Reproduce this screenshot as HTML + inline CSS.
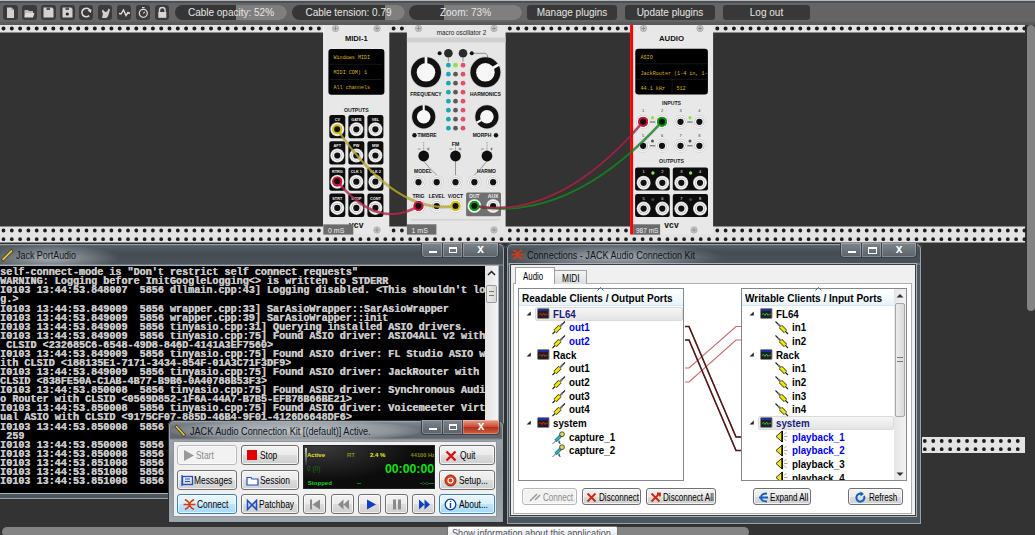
<!DOCTYPE html><html><head><meta charset="utf-8"><style>
*{margin:0;padding:0;box-sizing:border-box}
html,body{width:1035px;height:535px;overflow:hidden;background:#333333;font-family:"Liberation Sans",sans-serif}
.a{position:absolute}
.tb{position:absolute;top:5px;height:14.5px;width:14.5px;background:#3b3b3b;border-radius:3px}
.sl{position:absolute;top:5px;height:15px;border-radius:8px;background:#363636;overflow:hidden;color:#e6e6e6;font-size:10px;text-align:center;line-height:15px}
.sl i{position:absolute;top:0;bottom:0;right:0;background:#7f7f7f}
.sl span{position:relative}
.mb{position:absolute;top:5px;height:15px;border-radius:3px;background:#383838;color:#e6e6e6;font-size:10px;text-align:center;line-height:15px}
</style></head><body>

<svg class="a" style="left:0;top:0" width="1035" height="535" viewBox="0 0 1035 535">
<rect x="0" y="24.5" width="1025" height="8" fill="#e3e3e3"/>
<path d="M1.50 28.50a2 2 0 1 0 4 0a2 2 0 1 0 -4 0M9.80 28.50a2 2 0 1 0 4 0a2 2 0 1 0 -4 0M18.10 28.50a2 2 0 1 0 4 0a2 2 0 1 0 -4 0M26.40 28.50a2 2 0 1 0 4 0a2 2 0 1 0 -4 0M34.70 28.50a2 2 0 1 0 4 0a2 2 0 1 0 -4 0M43.00 28.50a2 2 0 1 0 4 0a2 2 0 1 0 -4 0M51.30 28.50a2 2 0 1 0 4 0a2 2 0 1 0 -4 0M59.60 28.50a2 2 0 1 0 4 0a2 2 0 1 0 -4 0M67.90 28.50a2 2 0 1 0 4 0a2 2 0 1 0 -4 0M76.20 28.50a2 2 0 1 0 4 0a2 2 0 1 0 -4 0M84.50 28.50a2 2 0 1 0 4 0a2 2 0 1 0 -4 0M92.80 28.50a2 2 0 1 0 4 0a2 2 0 1 0 -4 0M101.10 28.50a2 2 0 1 0 4 0a2 2 0 1 0 -4 0M109.40 28.50a2 2 0 1 0 4 0a2 2 0 1 0 -4 0M117.70 28.50a2 2 0 1 0 4 0a2 2 0 1 0 -4 0M126.00 28.50a2 2 0 1 0 4 0a2 2 0 1 0 -4 0M134.30 28.50a2 2 0 1 0 4 0a2 2 0 1 0 -4 0M142.60 28.50a2 2 0 1 0 4 0a2 2 0 1 0 -4 0M150.90 28.50a2 2 0 1 0 4 0a2 2 0 1 0 -4 0M159.20 28.50a2 2 0 1 0 4 0a2 2 0 1 0 -4 0M167.50 28.50a2 2 0 1 0 4 0a2 2 0 1 0 -4 0M175.80 28.50a2 2 0 1 0 4 0a2 2 0 1 0 -4 0M184.10 28.50a2 2 0 1 0 4 0a2 2 0 1 0 -4 0M192.40 28.50a2 2 0 1 0 4 0a2 2 0 1 0 -4 0M200.70 28.50a2 2 0 1 0 4 0a2 2 0 1 0 -4 0M209.00 28.50a2 2 0 1 0 4 0a2 2 0 1 0 -4 0M217.30 28.50a2 2 0 1 0 4 0a2 2 0 1 0 -4 0M225.60 28.50a2 2 0 1 0 4 0a2 2 0 1 0 -4 0M233.90 28.50a2 2 0 1 0 4 0a2 2 0 1 0 -4 0M242.20 28.50a2 2 0 1 0 4 0a2 2 0 1 0 -4 0M250.50 28.50a2 2 0 1 0 4 0a2 2 0 1 0 -4 0M258.80 28.50a2 2 0 1 0 4 0a2 2 0 1 0 -4 0M267.10 28.50a2 2 0 1 0 4 0a2 2 0 1 0 -4 0M275.40 28.50a2 2 0 1 0 4 0a2 2 0 1 0 -4 0M283.70 28.50a2 2 0 1 0 4 0a2 2 0 1 0 -4 0M292.00 28.50a2 2 0 1 0 4 0a2 2 0 1 0 -4 0M300.30 28.50a2 2 0 1 0 4 0a2 2 0 1 0 -4 0M308.60 28.50a2 2 0 1 0 4 0a2 2 0 1 0 -4 0M316.90 28.50a2 2 0 1 0 4 0a2 2 0 1 0 -4 0M325.20 28.50a2 2 0 1 0 4 0a2 2 0 1 0 -4 0M333.50 28.50a2 2 0 1 0 4 0a2 2 0 1 0 -4 0M341.80 28.50a2 2 0 1 0 4 0a2 2 0 1 0 -4 0M350.10 28.50a2 2 0 1 0 4 0a2 2 0 1 0 -4 0M358.40 28.50a2 2 0 1 0 4 0a2 2 0 1 0 -4 0M366.70 28.50a2 2 0 1 0 4 0a2 2 0 1 0 -4 0M375.00 28.50a2 2 0 1 0 4 0a2 2 0 1 0 -4 0M383.30 28.50a2 2 0 1 0 4 0a2 2 0 1 0 -4 0M391.60 28.50a2 2 0 1 0 4 0a2 2 0 1 0 -4 0M399.90 28.50a2 2 0 1 0 4 0a2 2 0 1 0 -4 0M408.20 28.50a2 2 0 1 0 4 0a2 2 0 1 0 -4 0M416.50 28.50a2 2 0 1 0 4 0a2 2 0 1 0 -4 0M424.80 28.50a2 2 0 1 0 4 0a2 2 0 1 0 -4 0M433.10 28.50a2 2 0 1 0 4 0a2 2 0 1 0 -4 0M441.40 28.50a2 2 0 1 0 4 0a2 2 0 1 0 -4 0M449.70 28.50a2 2 0 1 0 4 0a2 2 0 1 0 -4 0M458.00 28.50a2 2 0 1 0 4 0a2 2 0 1 0 -4 0M466.30 28.50a2 2 0 1 0 4 0a2 2 0 1 0 -4 0M474.60 28.50a2 2 0 1 0 4 0a2 2 0 1 0 -4 0M482.90 28.50a2 2 0 1 0 4 0a2 2 0 1 0 -4 0M491.20 28.50a2 2 0 1 0 4 0a2 2 0 1 0 -4 0M499.50 28.50a2 2 0 1 0 4 0a2 2 0 1 0 -4 0M507.80 28.50a2 2 0 1 0 4 0a2 2 0 1 0 -4 0M516.10 28.50a2 2 0 1 0 4 0a2 2 0 1 0 -4 0M524.40 28.50a2 2 0 1 0 4 0a2 2 0 1 0 -4 0M532.70 28.50a2 2 0 1 0 4 0a2 2 0 1 0 -4 0M541.00 28.50a2 2 0 1 0 4 0a2 2 0 1 0 -4 0M549.30 28.50a2 2 0 1 0 4 0a2 2 0 1 0 -4 0M557.60 28.50a2 2 0 1 0 4 0a2 2 0 1 0 -4 0M565.90 28.50a2 2 0 1 0 4 0a2 2 0 1 0 -4 0M574.20 28.50a2 2 0 1 0 4 0a2 2 0 1 0 -4 0M582.50 28.50a2 2 0 1 0 4 0a2 2 0 1 0 -4 0M590.80 28.50a2 2 0 1 0 4 0a2 2 0 1 0 -4 0M599.10 28.50a2 2 0 1 0 4 0a2 2 0 1 0 -4 0M607.40 28.50a2 2 0 1 0 4 0a2 2 0 1 0 -4 0M615.70 28.50a2 2 0 1 0 4 0a2 2 0 1 0 -4 0M624.00 28.50a2 2 0 1 0 4 0a2 2 0 1 0 -4 0M632.30 28.50a2 2 0 1 0 4 0a2 2 0 1 0 -4 0M640.60 28.50a2 2 0 1 0 4 0a2 2 0 1 0 -4 0M648.90 28.50a2 2 0 1 0 4 0a2 2 0 1 0 -4 0M657.20 28.50a2 2 0 1 0 4 0a2 2 0 1 0 -4 0M665.50 28.50a2 2 0 1 0 4 0a2 2 0 1 0 -4 0M673.80 28.50a2 2 0 1 0 4 0a2 2 0 1 0 -4 0M682.10 28.50a2 2 0 1 0 4 0a2 2 0 1 0 -4 0M690.40 28.50a2 2 0 1 0 4 0a2 2 0 1 0 -4 0M698.70 28.50a2 2 0 1 0 4 0a2 2 0 1 0 -4 0M707.00 28.50a2 2 0 1 0 4 0a2 2 0 1 0 -4 0M715.30 28.50a2 2 0 1 0 4 0a2 2 0 1 0 -4 0M723.60 28.50a2 2 0 1 0 4 0a2 2 0 1 0 -4 0M731.90 28.50a2 2 0 1 0 4 0a2 2 0 1 0 -4 0M740.20 28.50a2 2 0 1 0 4 0a2 2 0 1 0 -4 0M748.50 28.50a2 2 0 1 0 4 0a2 2 0 1 0 -4 0M756.80 28.50a2 2 0 1 0 4 0a2 2 0 1 0 -4 0M765.10 28.50a2 2 0 1 0 4 0a2 2 0 1 0 -4 0M773.40 28.50a2 2 0 1 0 4 0a2 2 0 1 0 -4 0M781.70 28.50a2 2 0 1 0 4 0a2 2 0 1 0 -4 0M790.00 28.50a2 2 0 1 0 4 0a2 2 0 1 0 -4 0M798.30 28.50a2 2 0 1 0 4 0a2 2 0 1 0 -4 0M806.60 28.50a2 2 0 1 0 4 0a2 2 0 1 0 -4 0M814.90 28.50a2 2 0 1 0 4 0a2 2 0 1 0 -4 0M823.20 28.50a2 2 0 1 0 4 0a2 2 0 1 0 -4 0M831.50 28.50a2 2 0 1 0 4 0a2 2 0 1 0 -4 0M839.80 28.50a2 2 0 1 0 4 0a2 2 0 1 0 -4 0M848.10 28.50a2 2 0 1 0 4 0a2 2 0 1 0 -4 0M856.40 28.50a2 2 0 1 0 4 0a2 2 0 1 0 -4 0M864.70 28.50a2 2 0 1 0 4 0a2 2 0 1 0 -4 0M873.00 28.50a2 2 0 1 0 4 0a2 2 0 1 0 -4 0M881.30 28.50a2 2 0 1 0 4 0a2 2 0 1 0 -4 0M889.60 28.50a2 2 0 1 0 4 0a2 2 0 1 0 -4 0M897.90 28.50a2 2 0 1 0 4 0a2 2 0 1 0 -4 0M906.20 28.50a2 2 0 1 0 4 0a2 2 0 1 0 -4 0M914.50 28.50a2 2 0 1 0 4 0a2 2 0 1 0 -4 0M922.80 28.50a2 2 0 1 0 4 0a2 2 0 1 0 -4 0M931.10 28.50a2 2 0 1 0 4 0a2 2 0 1 0 -4 0M939.40 28.50a2 2 0 1 0 4 0a2 2 0 1 0 -4 0M947.70 28.50a2 2 0 1 0 4 0a2 2 0 1 0 -4 0M956.00 28.50a2 2 0 1 0 4 0a2 2 0 1 0 -4 0M964.30 28.50a2 2 0 1 0 4 0a2 2 0 1 0 -4 0M972.60 28.50a2 2 0 1 0 4 0a2 2 0 1 0 -4 0M980.90 28.50a2 2 0 1 0 4 0a2 2 0 1 0 -4 0M989.20 28.50a2 2 0 1 0 4 0a2 2 0 1 0 -4 0M997.50 28.50a2 2 0 1 0 4 0a2 2 0 1 0 -4 0M1005.80 28.50a2 2 0 1 0 4 0a2 2 0 1 0 -4 0M1014.10 28.50a2 2 0 1 0 4 0a2 2 0 1 0 -4 0M1022.40 28.50a2 2 0 1 0 4 0a2 2 0 1 0 -4 0" fill="#1c1c1c"/>
<rect x="0" y="226.5" width="1025" height="16" fill="#e3e3e3"/>
<path d="M1.60 230.50a1.9 1.9 0 1 0 3.8 0a1.9 1.9 0 1 0 -3.8 0M9.90 230.50a1.9 1.9 0 1 0 3.8 0a1.9 1.9 0 1 0 -3.8 0M18.20 230.50a1.9 1.9 0 1 0 3.8 0a1.9 1.9 0 1 0 -3.8 0M26.50 230.50a1.9 1.9 0 1 0 3.8 0a1.9 1.9 0 1 0 -3.8 0M34.80 230.50a1.9 1.9 0 1 0 3.8 0a1.9 1.9 0 1 0 -3.8 0M43.10 230.50a1.9 1.9 0 1 0 3.8 0a1.9 1.9 0 1 0 -3.8 0M51.40 230.50a1.9 1.9 0 1 0 3.8 0a1.9 1.9 0 1 0 -3.8 0M59.70 230.50a1.9 1.9 0 1 0 3.8 0a1.9 1.9 0 1 0 -3.8 0M68.00 230.50a1.9 1.9 0 1 0 3.8 0a1.9 1.9 0 1 0 -3.8 0M76.30 230.50a1.9 1.9 0 1 0 3.8 0a1.9 1.9 0 1 0 -3.8 0M84.60 230.50a1.9 1.9 0 1 0 3.8 0a1.9 1.9 0 1 0 -3.8 0M92.90 230.50a1.9 1.9 0 1 0 3.8 0a1.9 1.9 0 1 0 -3.8 0M101.20 230.50a1.9 1.9 0 1 0 3.8 0a1.9 1.9 0 1 0 -3.8 0M109.50 230.50a1.9 1.9 0 1 0 3.8 0a1.9 1.9 0 1 0 -3.8 0M117.80 230.50a1.9 1.9 0 1 0 3.8 0a1.9 1.9 0 1 0 -3.8 0M126.10 230.50a1.9 1.9 0 1 0 3.8 0a1.9 1.9 0 1 0 -3.8 0M134.40 230.50a1.9 1.9 0 1 0 3.8 0a1.9 1.9 0 1 0 -3.8 0M142.70 230.50a1.9 1.9 0 1 0 3.8 0a1.9 1.9 0 1 0 -3.8 0M151.00 230.50a1.9 1.9 0 1 0 3.8 0a1.9 1.9 0 1 0 -3.8 0M159.30 230.50a1.9 1.9 0 1 0 3.8 0a1.9 1.9 0 1 0 -3.8 0M167.60 230.50a1.9 1.9 0 1 0 3.8 0a1.9 1.9 0 1 0 -3.8 0M175.90 230.50a1.9 1.9 0 1 0 3.8 0a1.9 1.9 0 1 0 -3.8 0M184.20 230.50a1.9 1.9 0 1 0 3.8 0a1.9 1.9 0 1 0 -3.8 0M192.50 230.50a1.9 1.9 0 1 0 3.8 0a1.9 1.9 0 1 0 -3.8 0M200.80 230.50a1.9 1.9 0 1 0 3.8 0a1.9 1.9 0 1 0 -3.8 0M209.10 230.50a1.9 1.9 0 1 0 3.8 0a1.9 1.9 0 1 0 -3.8 0M217.40 230.50a1.9 1.9 0 1 0 3.8 0a1.9 1.9 0 1 0 -3.8 0M225.70 230.50a1.9 1.9 0 1 0 3.8 0a1.9 1.9 0 1 0 -3.8 0M234.00 230.50a1.9 1.9 0 1 0 3.8 0a1.9 1.9 0 1 0 -3.8 0M242.30 230.50a1.9 1.9 0 1 0 3.8 0a1.9 1.9 0 1 0 -3.8 0M250.60 230.50a1.9 1.9 0 1 0 3.8 0a1.9 1.9 0 1 0 -3.8 0M258.90 230.50a1.9 1.9 0 1 0 3.8 0a1.9 1.9 0 1 0 -3.8 0M267.20 230.50a1.9 1.9 0 1 0 3.8 0a1.9 1.9 0 1 0 -3.8 0M275.50 230.50a1.9 1.9 0 1 0 3.8 0a1.9 1.9 0 1 0 -3.8 0M283.80 230.50a1.9 1.9 0 1 0 3.8 0a1.9 1.9 0 1 0 -3.8 0M292.10 230.50a1.9 1.9 0 1 0 3.8 0a1.9 1.9 0 1 0 -3.8 0M300.40 230.50a1.9 1.9 0 1 0 3.8 0a1.9 1.9 0 1 0 -3.8 0M308.70 230.50a1.9 1.9 0 1 0 3.8 0a1.9 1.9 0 1 0 -3.8 0M317.00 230.50a1.9 1.9 0 1 0 3.8 0a1.9 1.9 0 1 0 -3.8 0M325.30 230.50a1.9 1.9 0 1 0 3.8 0a1.9 1.9 0 1 0 -3.8 0M333.60 230.50a1.9 1.9 0 1 0 3.8 0a1.9 1.9 0 1 0 -3.8 0M341.90 230.50a1.9 1.9 0 1 0 3.8 0a1.9 1.9 0 1 0 -3.8 0M350.20 230.50a1.9 1.9 0 1 0 3.8 0a1.9 1.9 0 1 0 -3.8 0M358.50 230.50a1.9 1.9 0 1 0 3.8 0a1.9 1.9 0 1 0 -3.8 0M366.80 230.50a1.9 1.9 0 1 0 3.8 0a1.9 1.9 0 1 0 -3.8 0M375.10 230.50a1.9 1.9 0 1 0 3.8 0a1.9 1.9 0 1 0 -3.8 0M383.40 230.50a1.9 1.9 0 1 0 3.8 0a1.9 1.9 0 1 0 -3.8 0M391.70 230.50a1.9 1.9 0 1 0 3.8 0a1.9 1.9 0 1 0 -3.8 0M400.00 230.50a1.9 1.9 0 1 0 3.8 0a1.9 1.9 0 1 0 -3.8 0M408.30 230.50a1.9 1.9 0 1 0 3.8 0a1.9 1.9 0 1 0 -3.8 0M416.60 230.50a1.9 1.9 0 1 0 3.8 0a1.9 1.9 0 1 0 -3.8 0M424.90 230.50a1.9 1.9 0 1 0 3.8 0a1.9 1.9 0 1 0 -3.8 0M433.20 230.50a1.9 1.9 0 1 0 3.8 0a1.9 1.9 0 1 0 -3.8 0M441.50 230.50a1.9 1.9 0 1 0 3.8 0a1.9 1.9 0 1 0 -3.8 0M449.80 230.50a1.9 1.9 0 1 0 3.8 0a1.9 1.9 0 1 0 -3.8 0M458.10 230.50a1.9 1.9 0 1 0 3.8 0a1.9 1.9 0 1 0 -3.8 0M466.40 230.50a1.9 1.9 0 1 0 3.8 0a1.9 1.9 0 1 0 -3.8 0M474.70 230.50a1.9 1.9 0 1 0 3.8 0a1.9 1.9 0 1 0 -3.8 0M483.00 230.50a1.9 1.9 0 1 0 3.8 0a1.9 1.9 0 1 0 -3.8 0M491.30 230.50a1.9 1.9 0 1 0 3.8 0a1.9 1.9 0 1 0 -3.8 0M499.60 230.50a1.9 1.9 0 1 0 3.8 0a1.9 1.9 0 1 0 -3.8 0M507.90 230.50a1.9 1.9 0 1 0 3.8 0a1.9 1.9 0 1 0 -3.8 0M516.20 230.50a1.9 1.9 0 1 0 3.8 0a1.9 1.9 0 1 0 -3.8 0M524.50 230.50a1.9 1.9 0 1 0 3.8 0a1.9 1.9 0 1 0 -3.8 0M532.80 230.50a1.9 1.9 0 1 0 3.8 0a1.9 1.9 0 1 0 -3.8 0M541.10 230.50a1.9 1.9 0 1 0 3.8 0a1.9 1.9 0 1 0 -3.8 0M549.40 230.50a1.9 1.9 0 1 0 3.8 0a1.9 1.9 0 1 0 -3.8 0M557.70 230.50a1.9 1.9 0 1 0 3.8 0a1.9 1.9 0 1 0 -3.8 0M566.00 230.50a1.9 1.9 0 1 0 3.8 0a1.9 1.9 0 1 0 -3.8 0M574.30 230.50a1.9 1.9 0 1 0 3.8 0a1.9 1.9 0 1 0 -3.8 0M582.60 230.50a1.9 1.9 0 1 0 3.8 0a1.9 1.9 0 1 0 -3.8 0M590.90 230.50a1.9 1.9 0 1 0 3.8 0a1.9 1.9 0 1 0 -3.8 0M599.20 230.50a1.9 1.9 0 1 0 3.8 0a1.9 1.9 0 1 0 -3.8 0M607.50 230.50a1.9 1.9 0 1 0 3.8 0a1.9 1.9 0 1 0 -3.8 0M615.80 230.50a1.9 1.9 0 1 0 3.8 0a1.9 1.9 0 1 0 -3.8 0M624.10 230.50a1.9 1.9 0 1 0 3.8 0a1.9 1.9 0 1 0 -3.8 0M632.40 230.50a1.9 1.9 0 1 0 3.8 0a1.9 1.9 0 1 0 -3.8 0M640.70 230.50a1.9 1.9 0 1 0 3.8 0a1.9 1.9 0 1 0 -3.8 0M649.00 230.50a1.9 1.9 0 1 0 3.8 0a1.9 1.9 0 1 0 -3.8 0M657.30 230.50a1.9 1.9 0 1 0 3.8 0a1.9 1.9 0 1 0 -3.8 0M665.60 230.50a1.9 1.9 0 1 0 3.8 0a1.9 1.9 0 1 0 -3.8 0M673.90 230.50a1.9 1.9 0 1 0 3.8 0a1.9 1.9 0 1 0 -3.8 0M682.20 230.50a1.9 1.9 0 1 0 3.8 0a1.9 1.9 0 1 0 -3.8 0M690.50 230.50a1.9 1.9 0 1 0 3.8 0a1.9 1.9 0 1 0 -3.8 0M698.80 230.50a1.9 1.9 0 1 0 3.8 0a1.9 1.9 0 1 0 -3.8 0M707.10 230.50a1.9 1.9 0 1 0 3.8 0a1.9 1.9 0 1 0 -3.8 0M715.40 230.50a1.9 1.9 0 1 0 3.8 0a1.9 1.9 0 1 0 -3.8 0M723.70 230.50a1.9 1.9 0 1 0 3.8 0a1.9 1.9 0 1 0 -3.8 0M732.00 230.50a1.9 1.9 0 1 0 3.8 0a1.9 1.9 0 1 0 -3.8 0M740.30 230.50a1.9 1.9 0 1 0 3.8 0a1.9 1.9 0 1 0 -3.8 0M748.60 230.50a1.9 1.9 0 1 0 3.8 0a1.9 1.9 0 1 0 -3.8 0M756.90 230.50a1.9 1.9 0 1 0 3.8 0a1.9 1.9 0 1 0 -3.8 0M765.20 230.50a1.9 1.9 0 1 0 3.8 0a1.9 1.9 0 1 0 -3.8 0M773.50 230.50a1.9 1.9 0 1 0 3.8 0a1.9 1.9 0 1 0 -3.8 0M781.80 230.50a1.9 1.9 0 1 0 3.8 0a1.9 1.9 0 1 0 -3.8 0M790.10 230.50a1.9 1.9 0 1 0 3.8 0a1.9 1.9 0 1 0 -3.8 0M798.40 230.50a1.9 1.9 0 1 0 3.8 0a1.9 1.9 0 1 0 -3.8 0M806.70 230.50a1.9 1.9 0 1 0 3.8 0a1.9 1.9 0 1 0 -3.8 0M815.00 230.50a1.9 1.9 0 1 0 3.8 0a1.9 1.9 0 1 0 -3.8 0M823.30 230.50a1.9 1.9 0 1 0 3.8 0a1.9 1.9 0 1 0 -3.8 0M831.60 230.50a1.9 1.9 0 1 0 3.8 0a1.9 1.9 0 1 0 -3.8 0M839.90 230.50a1.9 1.9 0 1 0 3.8 0a1.9 1.9 0 1 0 -3.8 0M848.20 230.50a1.9 1.9 0 1 0 3.8 0a1.9 1.9 0 1 0 -3.8 0M856.50 230.50a1.9 1.9 0 1 0 3.8 0a1.9 1.9 0 1 0 -3.8 0M864.80 230.50a1.9 1.9 0 1 0 3.8 0a1.9 1.9 0 1 0 -3.8 0M873.10 230.50a1.9 1.9 0 1 0 3.8 0a1.9 1.9 0 1 0 -3.8 0M881.40 230.50a1.9 1.9 0 1 0 3.8 0a1.9 1.9 0 1 0 -3.8 0M889.70 230.50a1.9 1.9 0 1 0 3.8 0a1.9 1.9 0 1 0 -3.8 0M898.00 230.50a1.9 1.9 0 1 0 3.8 0a1.9 1.9 0 1 0 -3.8 0M906.30 230.50a1.9 1.9 0 1 0 3.8 0a1.9 1.9 0 1 0 -3.8 0M914.60 230.50a1.9 1.9 0 1 0 3.8 0a1.9 1.9 0 1 0 -3.8 0M922.90 230.50a1.9 1.9 0 1 0 3.8 0a1.9 1.9 0 1 0 -3.8 0M931.20 230.50a1.9 1.9 0 1 0 3.8 0a1.9 1.9 0 1 0 -3.8 0M939.50 230.50a1.9 1.9 0 1 0 3.8 0a1.9 1.9 0 1 0 -3.8 0M947.80 230.50a1.9 1.9 0 1 0 3.8 0a1.9 1.9 0 1 0 -3.8 0M956.10 230.50a1.9 1.9 0 1 0 3.8 0a1.9 1.9 0 1 0 -3.8 0M964.40 230.50a1.9 1.9 0 1 0 3.8 0a1.9 1.9 0 1 0 -3.8 0M972.70 230.50a1.9 1.9 0 1 0 3.8 0a1.9 1.9 0 1 0 -3.8 0M981.00 230.50a1.9 1.9 0 1 0 3.8 0a1.9 1.9 0 1 0 -3.8 0M989.30 230.50a1.9 1.9 0 1 0 3.8 0a1.9 1.9 0 1 0 -3.8 0M997.60 230.50a1.9 1.9 0 1 0 3.8 0a1.9 1.9 0 1 0 -3.8 0M1005.90 230.50a1.9 1.9 0 1 0 3.8 0a1.9 1.9 0 1 0 -3.8 0M1014.20 230.50a1.9 1.9 0 1 0 3.8 0a1.9 1.9 0 1 0 -3.8 0M1022.50 230.50a1.9 1.9 0 1 0 3.8 0a1.9 1.9 0 1 0 -3.8 0" fill="#1c1c1c"/>
<path d="M1.60 239.20a1.9 1.9 0 1 0 3.8 0a1.9 1.9 0 1 0 -3.8 0M9.90 239.20a1.9 1.9 0 1 0 3.8 0a1.9 1.9 0 1 0 -3.8 0M18.20 239.20a1.9 1.9 0 1 0 3.8 0a1.9 1.9 0 1 0 -3.8 0M26.50 239.20a1.9 1.9 0 1 0 3.8 0a1.9 1.9 0 1 0 -3.8 0M34.80 239.20a1.9 1.9 0 1 0 3.8 0a1.9 1.9 0 1 0 -3.8 0M43.10 239.20a1.9 1.9 0 1 0 3.8 0a1.9 1.9 0 1 0 -3.8 0M51.40 239.20a1.9 1.9 0 1 0 3.8 0a1.9 1.9 0 1 0 -3.8 0M59.70 239.20a1.9 1.9 0 1 0 3.8 0a1.9 1.9 0 1 0 -3.8 0M68.00 239.20a1.9 1.9 0 1 0 3.8 0a1.9 1.9 0 1 0 -3.8 0M76.30 239.20a1.9 1.9 0 1 0 3.8 0a1.9 1.9 0 1 0 -3.8 0M84.60 239.20a1.9 1.9 0 1 0 3.8 0a1.9 1.9 0 1 0 -3.8 0M92.90 239.20a1.9 1.9 0 1 0 3.8 0a1.9 1.9 0 1 0 -3.8 0M101.20 239.20a1.9 1.9 0 1 0 3.8 0a1.9 1.9 0 1 0 -3.8 0M109.50 239.20a1.9 1.9 0 1 0 3.8 0a1.9 1.9 0 1 0 -3.8 0M117.80 239.20a1.9 1.9 0 1 0 3.8 0a1.9 1.9 0 1 0 -3.8 0M126.10 239.20a1.9 1.9 0 1 0 3.8 0a1.9 1.9 0 1 0 -3.8 0M134.40 239.20a1.9 1.9 0 1 0 3.8 0a1.9 1.9 0 1 0 -3.8 0M142.70 239.20a1.9 1.9 0 1 0 3.8 0a1.9 1.9 0 1 0 -3.8 0M151.00 239.20a1.9 1.9 0 1 0 3.8 0a1.9 1.9 0 1 0 -3.8 0M159.30 239.20a1.9 1.9 0 1 0 3.8 0a1.9 1.9 0 1 0 -3.8 0M167.60 239.20a1.9 1.9 0 1 0 3.8 0a1.9 1.9 0 1 0 -3.8 0M175.90 239.20a1.9 1.9 0 1 0 3.8 0a1.9 1.9 0 1 0 -3.8 0M184.20 239.20a1.9 1.9 0 1 0 3.8 0a1.9 1.9 0 1 0 -3.8 0M192.50 239.20a1.9 1.9 0 1 0 3.8 0a1.9 1.9 0 1 0 -3.8 0M200.80 239.20a1.9 1.9 0 1 0 3.8 0a1.9 1.9 0 1 0 -3.8 0M209.10 239.20a1.9 1.9 0 1 0 3.8 0a1.9 1.9 0 1 0 -3.8 0M217.40 239.20a1.9 1.9 0 1 0 3.8 0a1.9 1.9 0 1 0 -3.8 0M225.70 239.20a1.9 1.9 0 1 0 3.8 0a1.9 1.9 0 1 0 -3.8 0M234.00 239.20a1.9 1.9 0 1 0 3.8 0a1.9 1.9 0 1 0 -3.8 0M242.30 239.20a1.9 1.9 0 1 0 3.8 0a1.9 1.9 0 1 0 -3.8 0M250.60 239.20a1.9 1.9 0 1 0 3.8 0a1.9 1.9 0 1 0 -3.8 0M258.90 239.20a1.9 1.9 0 1 0 3.8 0a1.9 1.9 0 1 0 -3.8 0M267.20 239.20a1.9 1.9 0 1 0 3.8 0a1.9 1.9 0 1 0 -3.8 0M275.50 239.20a1.9 1.9 0 1 0 3.8 0a1.9 1.9 0 1 0 -3.8 0M283.80 239.20a1.9 1.9 0 1 0 3.8 0a1.9 1.9 0 1 0 -3.8 0M292.10 239.20a1.9 1.9 0 1 0 3.8 0a1.9 1.9 0 1 0 -3.8 0M300.40 239.20a1.9 1.9 0 1 0 3.8 0a1.9 1.9 0 1 0 -3.8 0M308.70 239.20a1.9 1.9 0 1 0 3.8 0a1.9 1.9 0 1 0 -3.8 0M317.00 239.20a1.9 1.9 0 1 0 3.8 0a1.9 1.9 0 1 0 -3.8 0M325.30 239.20a1.9 1.9 0 1 0 3.8 0a1.9 1.9 0 1 0 -3.8 0M333.60 239.20a1.9 1.9 0 1 0 3.8 0a1.9 1.9 0 1 0 -3.8 0M341.90 239.20a1.9 1.9 0 1 0 3.8 0a1.9 1.9 0 1 0 -3.8 0M350.20 239.20a1.9 1.9 0 1 0 3.8 0a1.9 1.9 0 1 0 -3.8 0M358.50 239.20a1.9 1.9 0 1 0 3.8 0a1.9 1.9 0 1 0 -3.8 0M366.80 239.20a1.9 1.9 0 1 0 3.8 0a1.9 1.9 0 1 0 -3.8 0M375.10 239.20a1.9 1.9 0 1 0 3.8 0a1.9 1.9 0 1 0 -3.8 0M383.40 239.20a1.9 1.9 0 1 0 3.8 0a1.9 1.9 0 1 0 -3.8 0M391.70 239.20a1.9 1.9 0 1 0 3.8 0a1.9 1.9 0 1 0 -3.8 0M400.00 239.20a1.9 1.9 0 1 0 3.8 0a1.9 1.9 0 1 0 -3.8 0M408.30 239.20a1.9 1.9 0 1 0 3.8 0a1.9 1.9 0 1 0 -3.8 0M416.60 239.20a1.9 1.9 0 1 0 3.8 0a1.9 1.9 0 1 0 -3.8 0M424.90 239.20a1.9 1.9 0 1 0 3.8 0a1.9 1.9 0 1 0 -3.8 0M433.20 239.20a1.9 1.9 0 1 0 3.8 0a1.9 1.9 0 1 0 -3.8 0M441.50 239.20a1.9 1.9 0 1 0 3.8 0a1.9 1.9 0 1 0 -3.8 0M449.80 239.20a1.9 1.9 0 1 0 3.8 0a1.9 1.9 0 1 0 -3.8 0M458.10 239.20a1.9 1.9 0 1 0 3.8 0a1.9 1.9 0 1 0 -3.8 0M466.40 239.20a1.9 1.9 0 1 0 3.8 0a1.9 1.9 0 1 0 -3.8 0M474.70 239.20a1.9 1.9 0 1 0 3.8 0a1.9 1.9 0 1 0 -3.8 0M483.00 239.20a1.9 1.9 0 1 0 3.8 0a1.9 1.9 0 1 0 -3.8 0M491.30 239.20a1.9 1.9 0 1 0 3.8 0a1.9 1.9 0 1 0 -3.8 0M499.60 239.20a1.9 1.9 0 1 0 3.8 0a1.9 1.9 0 1 0 -3.8 0M507.90 239.20a1.9 1.9 0 1 0 3.8 0a1.9 1.9 0 1 0 -3.8 0M516.20 239.20a1.9 1.9 0 1 0 3.8 0a1.9 1.9 0 1 0 -3.8 0M524.50 239.20a1.9 1.9 0 1 0 3.8 0a1.9 1.9 0 1 0 -3.8 0M532.80 239.20a1.9 1.9 0 1 0 3.8 0a1.9 1.9 0 1 0 -3.8 0M541.10 239.20a1.9 1.9 0 1 0 3.8 0a1.9 1.9 0 1 0 -3.8 0M549.40 239.20a1.9 1.9 0 1 0 3.8 0a1.9 1.9 0 1 0 -3.8 0M557.70 239.20a1.9 1.9 0 1 0 3.8 0a1.9 1.9 0 1 0 -3.8 0M566.00 239.20a1.9 1.9 0 1 0 3.8 0a1.9 1.9 0 1 0 -3.8 0M574.30 239.20a1.9 1.9 0 1 0 3.8 0a1.9 1.9 0 1 0 -3.8 0M582.60 239.20a1.9 1.9 0 1 0 3.8 0a1.9 1.9 0 1 0 -3.8 0M590.90 239.20a1.9 1.9 0 1 0 3.8 0a1.9 1.9 0 1 0 -3.8 0M599.20 239.20a1.9 1.9 0 1 0 3.8 0a1.9 1.9 0 1 0 -3.8 0M607.50 239.20a1.9 1.9 0 1 0 3.8 0a1.9 1.9 0 1 0 -3.8 0M615.80 239.20a1.9 1.9 0 1 0 3.8 0a1.9 1.9 0 1 0 -3.8 0M624.10 239.20a1.9 1.9 0 1 0 3.8 0a1.9 1.9 0 1 0 -3.8 0M632.40 239.20a1.9 1.9 0 1 0 3.8 0a1.9 1.9 0 1 0 -3.8 0M640.70 239.20a1.9 1.9 0 1 0 3.8 0a1.9 1.9 0 1 0 -3.8 0M649.00 239.20a1.9 1.9 0 1 0 3.8 0a1.9 1.9 0 1 0 -3.8 0M657.30 239.20a1.9 1.9 0 1 0 3.8 0a1.9 1.9 0 1 0 -3.8 0M665.60 239.20a1.9 1.9 0 1 0 3.8 0a1.9 1.9 0 1 0 -3.8 0M673.90 239.20a1.9 1.9 0 1 0 3.8 0a1.9 1.9 0 1 0 -3.8 0M682.20 239.20a1.9 1.9 0 1 0 3.8 0a1.9 1.9 0 1 0 -3.8 0M690.50 239.20a1.9 1.9 0 1 0 3.8 0a1.9 1.9 0 1 0 -3.8 0M698.80 239.20a1.9 1.9 0 1 0 3.8 0a1.9 1.9 0 1 0 -3.8 0M707.10 239.20a1.9 1.9 0 1 0 3.8 0a1.9 1.9 0 1 0 -3.8 0M715.40 239.20a1.9 1.9 0 1 0 3.8 0a1.9 1.9 0 1 0 -3.8 0M723.70 239.20a1.9 1.9 0 1 0 3.8 0a1.9 1.9 0 1 0 -3.8 0M732.00 239.20a1.9 1.9 0 1 0 3.8 0a1.9 1.9 0 1 0 -3.8 0M740.30 239.20a1.9 1.9 0 1 0 3.8 0a1.9 1.9 0 1 0 -3.8 0M748.60 239.20a1.9 1.9 0 1 0 3.8 0a1.9 1.9 0 1 0 -3.8 0M756.90 239.20a1.9 1.9 0 1 0 3.8 0a1.9 1.9 0 1 0 -3.8 0M765.20 239.20a1.9 1.9 0 1 0 3.8 0a1.9 1.9 0 1 0 -3.8 0M773.50 239.20a1.9 1.9 0 1 0 3.8 0a1.9 1.9 0 1 0 -3.8 0M781.80 239.20a1.9 1.9 0 1 0 3.8 0a1.9 1.9 0 1 0 -3.8 0M790.10 239.20a1.9 1.9 0 1 0 3.8 0a1.9 1.9 0 1 0 -3.8 0M798.40 239.20a1.9 1.9 0 1 0 3.8 0a1.9 1.9 0 1 0 -3.8 0M806.70 239.20a1.9 1.9 0 1 0 3.8 0a1.9 1.9 0 1 0 -3.8 0M815.00 239.20a1.9 1.9 0 1 0 3.8 0a1.9 1.9 0 1 0 -3.8 0M823.30 239.20a1.9 1.9 0 1 0 3.8 0a1.9 1.9 0 1 0 -3.8 0M831.60 239.20a1.9 1.9 0 1 0 3.8 0a1.9 1.9 0 1 0 -3.8 0M839.90 239.20a1.9 1.9 0 1 0 3.8 0a1.9 1.9 0 1 0 -3.8 0M848.20 239.20a1.9 1.9 0 1 0 3.8 0a1.9 1.9 0 1 0 -3.8 0M856.50 239.20a1.9 1.9 0 1 0 3.8 0a1.9 1.9 0 1 0 -3.8 0M864.80 239.20a1.9 1.9 0 1 0 3.8 0a1.9 1.9 0 1 0 -3.8 0M873.10 239.20a1.9 1.9 0 1 0 3.8 0a1.9 1.9 0 1 0 -3.8 0M881.40 239.20a1.9 1.9 0 1 0 3.8 0a1.9 1.9 0 1 0 -3.8 0M889.70 239.20a1.9 1.9 0 1 0 3.8 0a1.9 1.9 0 1 0 -3.8 0M898.00 239.20a1.9 1.9 0 1 0 3.8 0a1.9 1.9 0 1 0 -3.8 0M906.30 239.20a1.9 1.9 0 1 0 3.8 0a1.9 1.9 0 1 0 -3.8 0M914.60 239.20a1.9 1.9 0 1 0 3.8 0a1.9 1.9 0 1 0 -3.8 0M922.90 239.20a1.9 1.9 0 1 0 3.8 0a1.9 1.9 0 1 0 -3.8 0M931.20 239.20a1.9 1.9 0 1 0 3.8 0a1.9 1.9 0 1 0 -3.8 0M939.50 239.20a1.9 1.9 0 1 0 3.8 0a1.9 1.9 0 1 0 -3.8 0M947.80 239.20a1.9 1.9 0 1 0 3.8 0a1.9 1.9 0 1 0 -3.8 0M956.10 239.20a1.9 1.9 0 1 0 3.8 0a1.9 1.9 0 1 0 -3.8 0M964.40 239.20a1.9 1.9 0 1 0 3.8 0a1.9 1.9 0 1 0 -3.8 0M972.70 239.20a1.9 1.9 0 1 0 3.8 0a1.9 1.9 0 1 0 -3.8 0M981.00 239.20a1.9 1.9 0 1 0 3.8 0a1.9 1.9 0 1 0 -3.8 0M989.30 239.20a1.9 1.9 0 1 0 3.8 0a1.9 1.9 0 1 0 -3.8 0M997.60 239.20a1.9 1.9 0 1 0 3.8 0a1.9 1.9 0 1 0 -3.8 0M1005.90 239.20a1.9 1.9 0 1 0 3.8 0a1.9 1.9 0 1 0 -3.8 0M1014.20 239.20a1.9 1.9 0 1 0 3.8 0a1.9 1.9 0 1 0 -3.8 0M1022.50 239.20a1.9 1.9 0 1 0 3.8 0a1.9 1.9 0 1 0 -3.8 0" fill="#1c1c1c"/>
<rect x="921" y="437" width="104" height="16" fill="#e3e3e3"/>
<path d="M922.90 441.00a1.9 1.9 0 1 0 3.8 0a1.9 1.9 0 1 0 -3.8 0M931.35 441.00a1.9 1.9 0 1 0 3.8 0a1.9 1.9 0 1 0 -3.8 0M939.80 441.00a1.9 1.9 0 1 0 3.8 0a1.9 1.9 0 1 0 -3.8 0M948.25 441.00a1.9 1.9 0 1 0 3.8 0a1.9 1.9 0 1 0 -3.8 0M956.70 441.00a1.9 1.9 0 1 0 3.8 0a1.9 1.9 0 1 0 -3.8 0M965.15 441.00a1.9 1.9 0 1 0 3.8 0a1.9 1.9 0 1 0 -3.8 0M973.60 441.00a1.9 1.9 0 1 0 3.8 0a1.9 1.9 0 1 0 -3.8 0M982.05 441.00a1.9 1.9 0 1 0 3.8 0a1.9 1.9 0 1 0 -3.8 0M990.50 441.00a1.9 1.9 0 1 0 3.8 0a1.9 1.9 0 1 0 -3.8 0M998.95 441.00a1.9 1.9 0 1 0 3.8 0a1.9 1.9 0 1 0 -3.8 0M1007.40 441.00a1.9 1.9 0 1 0 3.8 0a1.9 1.9 0 1 0 -3.8 0M1015.85 441.00a1.9 1.9 0 1 0 3.8 0a1.9 1.9 0 1 0 -3.8 0" fill="#1c1c1c"/>
<path d="M922.90 449.20a1.9 1.9 0 1 0 3.8 0a1.9 1.9 0 1 0 -3.8 0M931.35 449.20a1.9 1.9 0 1 0 3.8 0a1.9 1.9 0 1 0 -3.8 0M939.80 449.20a1.9 1.9 0 1 0 3.8 0a1.9 1.9 0 1 0 -3.8 0M948.25 449.20a1.9 1.9 0 1 0 3.8 0a1.9 1.9 0 1 0 -3.8 0M956.70 449.20a1.9 1.9 0 1 0 3.8 0a1.9 1.9 0 1 0 -3.8 0M965.15 449.20a1.9 1.9 0 1 0 3.8 0a1.9 1.9 0 1 0 -3.8 0M973.60 449.20a1.9 1.9 0 1 0 3.8 0a1.9 1.9 0 1 0 -3.8 0M982.05 449.20a1.9 1.9 0 1 0 3.8 0a1.9 1.9 0 1 0 -3.8 0M990.50 449.20a1.9 1.9 0 1 0 3.8 0a1.9 1.9 0 1 0 -3.8 0M998.95 449.20a1.9 1.9 0 1 0 3.8 0a1.9 1.9 0 1 0 -3.8 0M1007.40 449.20a1.9 1.9 0 1 0 3.8 0a1.9 1.9 0 1 0 -3.8 0M1015.85 449.20a1.9 1.9 0 1 0 3.8 0a1.9 1.9 0 1 0 -3.8 0" fill="#1c1c1c"/>
<rect x="323.3" y="24" width="66" height="210.5" fill="#e8e8e8"/>
<rect x="323.3" y="24" width="0.8" height="210.5" fill="#f8f8f8"/>
<circle cx="335.50" cy="28.50" r="3.2" fill="#c8c8c8" stroke="#9a9a9a" stroke-width="0.6"/>
<path d="M333.5 28.5h4M335.5 26.5v4" stroke="#8a8a8a" stroke-width="0.9"/>
<circle cx="377.00" cy="28.50" r="3.2" fill="#c8c8c8" stroke="#9a9a9a" stroke-width="0.6"/>
<path d="M375.0 28.5h4M377 26.5v4" stroke="#8a8a8a" stroke-width="0.9"/>
<circle cx="377.00" cy="230.00" r="3.2" fill="#c8c8c8" stroke="#9a9a9a" stroke-width="0.6"/>
<path d="M375.0 230h4M377 228.0v4" stroke="#8a8a8a" stroke-width="0.9"/>
<text x="356.3" y="41.2" font-family="Liberation Sans" font-size="7.6" font-weight="bold" fill="#111" text-anchor="middle" >MIDI-1</text>
<rect x="328.4" y="49" width="56" height="45.8" rx="3" fill="#000"/>
<path d="M330 64.3h52M330 79.5h52" stroke="#262626" stroke-width="0.6"/>
<text x="333.5" y="58.8" font-family="Liberation Mono" font-size="5.8" font-weight="normal" fill="#dcb41c" text-anchor="start" textLength="36.6" lengthAdjust="spacingAndGlyphs">Windows MIDI</text>
<text x="333.5" y="73.8" font-family="Liberation Mono" font-size="5.8" font-weight="normal" fill="#dcb41c" text-anchor="start" textLength="33.5" lengthAdjust="spacingAndGlyphs">MIDI COM) 1</text>
<text x="333.5" y="88.8" font-family="Liberation Mono" font-size="5.8" font-weight="normal" fill="#dcb41c" text-anchor="start" textLength="36.6" lengthAdjust="spacingAndGlyphs">All channels</text>
<text x="356.3" y="111.5" font-family="Liberation Sans" font-size="5.2" font-weight="bold" fill="#222" text-anchor="middle" >OUTPUTS</text>
<rect x="329.3" y="115.0" width="16" height="23.3" rx="2.2" fill="#0d0d0d"/>
<text x="337.3" y="121.0" font-family="Liberation Sans" font-size="3.8" font-weight="bold" fill="#f0f0f0" text-anchor="middle" >CV</text>
<circle cx="337.30" cy="129.30" r="7.0" fill="#d0d0d0" />
<circle cx="337.30" cy="129.30" r="6.3" fill="#f6f6f6" />
<circle cx="337.30" cy="129.30" r="5.0" fill="#a8a8a8" />
<circle cx="337.30" cy="129.30" r="4.5" fill="#f2f2f2" />
<circle cx="337.30" cy="129.30" r="4.9" fill="#d8c000" />
<circle cx="337.30" cy="129.30" r="3.0" fill="#111" />
<rect x="348.35" y="115.0" width="16" height="23.3" rx="2.2" fill="#0d0d0d"/>
<text x="356.35" y="121.0" font-family="Liberation Sans" font-size="3.8" font-weight="bold" fill="#f0f0f0" text-anchor="middle" >GATE</text>
<circle cx="356.35" cy="129.30" r="7.0" fill="#d0d0d0" />
<circle cx="356.35" cy="129.30" r="6.3" fill="#f6f6f6" />
<circle cx="356.35" cy="129.30" r="5.0" fill="#a8a8a8" />
<circle cx="356.35" cy="129.30" r="4.5" fill="#f2f2f2" />
<circle cx="356.35" cy="129.30" r="3.1" fill="#111" />
<rect x="367.40000000000003" y="115.0" width="16" height="23.3" rx="2.2" fill="#0d0d0d"/>
<text x="375.40000000000003" y="121.0" font-family="Liberation Sans" font-size="3.8" font-weight="bold" fill="#f0f0f0" text-anchor="middle" >VEL</text>
<circle cx="375.40" cy="129.30" r="7.0" fill="#d0d0d0" />
<circle cx="375.40" cy="129.30" r="6.3" fill="#f6f6f6" />
<circle cx="375.40" cy="129.30" r="5.0" fill="#a8a8a8" />
<circle cx="375.40" cy="129.30" r="4.5" fill="#f2f2f2" />
<circle cx="375.40" cy="129.30" r="3.1" fill="#111" />
<rect x="329.3" y="141.2" width="16" height="23.3" rx="2.2" fill="#0d0d0d"/>
<text x="337.3" y="147.2" font-family="Liberation Sans" font-size="3.8" font-weight="bold" fill="#f0f0f0" text-anchor="middle" >AFT</text>
<circle cx="337.30" cy="155.50" r="7.0" fill="#d0d0d0" />
<circle cx="337.30" cy="155.50" r="6.3" fill="#f6f6f6" />
<circle cx="337.30" cy="155.50" r="5.0" fill="#a8a8a8" />
<circle cx="337.30" cy="155.50" r="4.5" fill="#f2f2f2" />
<circle cx="337.30" cy="155.50" r="3.1" fill="#111" />
<rect x="348.35" y="141.2" width="16" height="23.3" rx="2.2" fill="#0d0d0d"/>
<text x="356.35" y="147.2" font-family="Liberation Sans" font-size="3.8" font-weight="bold" fill="#f0f0f0" text-anchor="middle" >PW</text>
<circle cx="356.35" cy="155.50" r="7.0" fill="#d0d0d0" />
<circle cx="356.35" cy="155.50" r="6.3" fill="#f6f6f6" />
<circle cx="356.35" cy="155.50" r="5.0" fill="#a8a8a8" />
<circle cx="356.35" cy="155.50" r="4.5" fill="#f2f2f2" />
<circle cx="356.35" cy="155.50" r="3.1" fill="#111" />
<rect x="367.40000000000003" y="141.2" width="16" height="23.3" rx="2.2" fill="#0d0d0d"/>
<text x="375.40000000000003" y="147.2" font-family="Liberation Sans" font-size="3.8" font-weight="bold" fill="#f0f0f0" text-anchor="middle" >MW</text>
<circle cx="375.40" cy="155.50" r="7.0" fill="#d0d0d0" />
<circle cx="375.40" cy="155.50" r="6.3" fill="#f6f6f6" />
<circle cx="375.40" cy="155.50" r="5.0" fill="#a8a8a8" />
<circle cx="375.40" cy="155.50" r="4.5" fill="#f2f2f2" />
<circle cx="375.40" cy="155.50" r="3.1" fill="#111" />
<rect x="329.3" y="167.4" width="16" height="23.3" rx="2.2" fill="#0d0d0d"/>
<text x="337.3" y="173.4" font-family="Liberation Sans" font-size="3.8" font-weight="bold" fill="#f0f0f0" text-anchor="middle" >RTRG</text>
<circle cx="337.30" cy="181.70" r="7.0" fill="#d0d0d0" />
<circle cx="337.30" cy="181.70" r="6.3" fill="#f6f6f6" />
<circle cx="337.30" cy="181.70" r="5.0" fill="#a8a8a8" />
<circle cx="337.30" cy="181.70" r="4.5" fill="#f2f2f2" />
<circle cx="337.30" cy="181.70" r="4.9" fill="#d0123c" />
<circle cx="337.30" cy="181.70" r="3.0" fill="#111" />
<rect x="348.35" y="167.4" width="16" height="23.3" rx="2.2" fill="#0d0d0d"/>
<text x="356.35" y="173.4" font-family="Liberation Sans" font-size="3.8" font-weight="bold" fill="#f0f0f0" text-anchor="middle" >CLK 1</text>
<circle cx="356.35" cy="181.70" r="7.0" fill="#d0d0d0" />
<circle cx="356.35" cy="181.70" r="6.3" fill="#f6f6f6" />
<circle cx="356.35" cy="181.70" r="5.0" fill="#a8a8a8" />
<circle cx="356.35" cy="181.70" r="4.5" fill="#f2f2f2" />
<circle cx="356.35" cy="181.70" r="3.1" fill="#111" />
<rect x="367.40000000000003" y="167.4" width="16" height="23.3" rx="2.2" fill="#0d0d0d"/>
<text x="375.40000000000003" y="173.4" font-family="Liberation Sans" font-size="3.8" font-weight="bold" fill="#f0f0f0" text-anchor="middle" >CLK 2</text>
<circle cx="375.40" cy="181.70" r="7.0" fill="#d0d0d0" />
<circle cx="375.40" cy="181.70" r="6.3" fill="#f6f6f6" />
<circle cx="375.40" cy="181.70" r="5.0" fill="#a8a8a8" />
<circle cx="375.40" cy="181.70" r="4.5" fill="#f2f2f2" />
<circle cx="375.40" cy="181.70" r="3.1" fill="#111" />
<rect x="329.3" y="193.6" width="16" height="23.3" rx="2.2" fill="#0d0d0d"/>
<text x="337.3" y="199.6" font-family="Liberation Sans" font-size="3.8" font-weight="bold" fill="#f0f0f0" text-anchor="middle" >STRT</text>
<circle cx="337.30" cy="207.90" r="7.0" fill="#d0d0d0" />
<circle cx="337.30" cy="207.90" r="6.3" fill="#f6f6f6" />
<circle cx="337.30" cy="207.90" r="5.0" fill="#a8a8a8" />
<circle cx="337.30" cy="207.90" r="4.5" fill="#f2f2f2" />
<circle cx="337.30" cy="207.90" r="3.1" fill="#111" />
<rect x="348.35" y="193.6" width="16" height="23.3" rx="2.2" fill="#0d0d0d"/>
<text x="356.35" y="199.6" font-family="Liberation Sans" font-size="3.8" font-weight="bold" fill="#f0f0f0" text-anchor="middle" >STOP</text>
<circle cx="356.35" cy="207.90" r="7.0" fill="#d0d0d0" />
<circle cx="356.35" cy="207.90" r="6.3" fill="#f6f6f6" />
<circle cx="356.35" cy="207.90" r="5.0" fill="#a8a8a8" />
<circle cx="356.35" cy="207.90" r="4.5" fill="#f2f2f2" />
<circle cx="356.35" cy="207.90" r="3.1" fill="#111" />
<rect x="367.40000000000003" y="193.6" width="16" height="23.3" rx="2.2" fill="#0d0d0d"/>
<text x="375.40000000000003" y="199.6" font-family="Liberation Sans" font-size="3.8" font-weight="bold" fill="#f0f0f0" text-anchor="middle" >CONT</text>
<circle cx="375.40" cy="207.90" r="7.0" fill="#d0d0d0" />
<circle cx="375.40" cy="207.90" r="6.3" fill="#f6f6f6" />
<circle cx="375.40" cy="207.90" r="5.0" fill="#a8a8a8" />
<circle cx="375.40" cy="207.90" r="4.5" fill="#f2f2f2" />
<circle cx="375.40" cy="207.90" r="3.1" fill="#111" />
<text x="356.3" y="228" font-family="Liberation Sans" font-size="8.5" font-weight="bold" fill="#111" text-anchor="middle" letter-spacing="0.2">vcv</text>
<rect x="323.3" y="224.4" width="30" height="10.2" fill="#6b6b6b"/>
<text x="328" y="232.5" font-family="Liberation Sans" font-size="7" font-weight="normal" fill="#f0f0f0" text-anchor="start" >0 mS</text>
<rect x="406.9" y="24" width="98.7" height="210.5" fill="#e6e6e6"/>
<rect x="406.9" y="37.5" width="98.7" height="5" fill="#cfcfcf"/>
<circle cx="418.50" cy="28.50" r="3.2" fill="#c8c8c8" stroke="#9a9a9a" stroke-width="0.6"/>
<path d="M416.5 28.5h4M418.5 26.5v4" stroke="#8a8a8a" stroke-width="0.9"/>
<circle cx="494.00" cy="28.50" r="3.2" fill="#c8c8c8" stroke="#9a9a9a" stroke-width="0.6"/>
<path d="M492.0 28.5h4M494 26.5v4" stroke="#8a8a8a" stroke-width="0.9"/>
<circle cx="494.00" cy="230.00" r="3.2" fill="#c8c8c8" stroke="#9a9a9a" stroke-width="0.6"/>
<path d="M492.0 230h4M494 228.0v4" stroke="#8a8a8a" stroke-width="0.9"/>
<text x="461.5" y="35.2" font-family="Liberation Sans" font-size="6.3" font-weight="normal" fill="#222" text-anchor="middle" >macro oscillator 2</text>
<circle cx="426.00" cy="72.30" r="15.8" fill="#cfcfcf" />
<circle cx="426.00" cy="72.30" r="15" fill="#111" />
<circle cx="426.00" cy="72.30" r="9.3" fill="#f7f7f7" />
<line x1="426.00" y1="66.72" x2="426.00" y2="57.00" stroke="#f7f7f7" stroke-width="2.70"/>
<circle cx="485.40" cy="72.30" r="15.8" fill="#cfcfcf" />
<circle cx="485.40" cy="72.30" r="15" fill="#111" />
<circle cx="485.40" cy="72.30" r="9.3" fill="#f7f7f7" />
<line x1="490.23" y1="69.51" x2="498.65" y2="64.65" stroke="#f7f7f7" stroke-width="2.70"/>
<text x="426" y="95.5" font-family="Liberation Sans" font-size="5" font-weight="bold" fill="#111" text-anchor="middle" >FREQUENCY</text>
<text x="485.4" y="95.5" font-family="Liberation Sans" font-size="5" font-weight="bold" fill="#111" text-anchor="middle" >HARMONICS</text>
<circle cx="448.40" cy="53.30" r="4.3" fill="#2a2a2a" />
<circle cx="463.00" cy="53.30" r="4.3" fill="#2a2a2a" />
<circle cx="439.60" cy="53.30" r="2.0" fill="#111" />
<circle cx="471.80" cy="53.30" r="2.0" fill="#111" />
<path d="M448.4 57.6v4M463 57.6v4M473.5 53.3h12l2 2v4" stroke="#333" stroke-width="0.5" fill="none"/>
<circle cx="448.40" cy="65.20" r="2.4" fill="#1aa7b8" />
<circle cx="455.50" cy="65.20" r="2.4" fill="#8de34a" />
<circle cx="463.00" cy="65.20" r="2.4" fill="#e0506e" />
<circle cx="448.40" cy="74.20" r="2.4" fill="#1aa7b8" />
<circle cx="455.50" cy="74.20" r="2.4" fill="#5a5a5a" />
<circle cx="463.00" cy="74.20" r="2.4" fill="#e0506e" />
<circle cx="448.40" cy="83.20" r="2.4" fill="#1aa7b8" />
<circle cx="455.50" cy="83.20" r="2.4" fill="#5a5a5a" />
<circle cx="463.00" cy="83.20" r="2.4" fill="#e0506e" />
<circle cx="448.40" cy="92.20" r="2.4" fill="#1aa7b8" />
<circle cx="455.50" cy="92.20" r="2.4" fill="#5a5a5a" />
<circle cx="463.00" cy="92.20" r="2.4" fill="#e0506e" />
<circle cx="448.40" cy="101.20" r="2.4" fill="#1aa7b8" />
<circle cx="455.50" cy="101.20" r="2.4" fill="#5a5a5a" />
<circle cx="463.00" cy="101.20" r="2.4" fill="#e0506e" />
<circle cx="448.40" cy="110.20" r="2.4" fill="#1aa7b8" />
<circle cx="455.50" cy="110.20" r="2.4" fill="#5a5a5a" />
<circle cx="463.00" cy="110.20" r="2.4" fill="#e0506e" />
<circle cx="448.40" cy="119.20" r="2.4" fill="#1aa7b8" />
<circle cx="455.50" cy="119.20" r="2.4" fill="#5a5a5a" />
<circle cx="463.00" cy="119.20" r="2.4" fill="#e0506e" />
<circle cx="448.40" cy="128.20" r="2.4" fill="#1aa7b8" />
<circle cx="455.50" cy="128.20" r="2.4" fill="#5a5a5a" />
<circle cx="463.00" cy="128.20" r="2.4" fill="#e0506e" />
<circle cx="423.70" cy="116.80" r="12.4" fill="#cfcfcf" />
<circle cx="423.70" cy="116.80" r="11.6" fill="#111" />
<circle cx="423.70" cy="116.80" r="6.8" fill="#f7f7f7" />
<line x1="423.70" y1="112.72" x2="423.70" y2="104.90" stroke="#f7f7f7" stroke-width="2.09"/>
<circle cx="486.90" cy="116.80" r="12.4" fill="#cfcfcf" />
<circle cx="486.90" cy="116.80" r="11.6" fill="#111" />
<circle cx="486.90" cy="116.80" r="6.8" fill="#f7f7f7" />
<line x1="483.37" y1="118.84" x2="476.59" y2="122.75" stroke="#f7f7f7" stroke-width="2.09"/>
<text x="427" y="137" font-family="Liberation Sans" font-size="5" font-weight="bold" fill="#111" text-anchor="middle" >TIMBRE</text>
<circle cx="414.50" cy="135.20" r="2.2" fill="#111" />
<text x="482" y="137" font-family="Liberation Sans" font-size="5" font-weight="bold" fill="#111" text-anchor="middle" >MORPH</text>
<circle cx="496.00" cy="135.20" r="2.2" fill="#111" />
<text x="455.5" y="146" font-family="Liberation Sans" font-size="5.2" font-weight="bold" fill="#111" text-anchor="middle" >FM</text>
<path d="M417.7 149h3M426.7 149h3M428.2 147.5v3" stroke="#444" stroke-width="0.5"/>
<path d="M423.7 142v9" stroke="#555" stroke-width="0.5" stroke-dasharray="1 0.5"/>
<circle cx="423.70" cy="156.00" r="5.4" fill="#0f0f0f" />
<path d="M449.5 149h3M458.5 149h3M460.0 147.5v3" stroke="#444" stroke-width="0.5"/>
<path d="M455.5 142v9" stroke="#555" stroke-width="0.5" stroke-dasharray="1 0.5"/>
<circle cx="455.50" cy="156.00" r="5.4" fill="#0f0f0f" />
<path d="M481 149h3M490 149h3M491.5 147.5v3" stroke="#444" stroke-width="0.5"/>
<path d="M487 142v9" stroke="#555" stroke-width="0.5" stroke-dasharray="1 0.5"/>
<circle cx="487.00" cy="156.00" r="5.4" fill="#0f0f0f" />
<path d="M423.7 161q6 8 13 14M455.5 161v14M487 161q-6 8 -12.6 14" stroke="#444" stroke-width="0.5" fill="none"/>
<text x="423" y="173" font-family="Liberation Sans" font-size="5" font-weight="bold" fill="#111" text-anchor="middle" >MODEL</text>
<text x="486.5" y="173" font-family="Liberation Sans" font-size="5" font-weight="bold" fill="#111" text-anchor="middle" >HARMO</text>
<circle cx="418.50" cy="182.20" r="7.0" fill="#d0d0d0" />
<circle cx="418.50" cy="182.20" r="6.3" fill="#f6f6f6" />
<circle cx="418.50" cy="182.20" r="5.0" fill="#a8a8a8" />
<circle cx="418.50" cy="182.20" r="4.5" fill="#f2f2f2" />
<circle cx="418.50" cy="182.20" r="3.1" fill="#111" />
<circle cx="436.70" cy="182.20" r="7.0" fill="#d0d0d0" />
<circle cx="436.70" cy="182.20" r="6.3" fill="#f6f6f6" />
<circle cx="436.70" cy="182.20" r="5.0" fill="#a8a8a8" />
<circle cx="436.70" cy="182.20" r="4.5" fill="#f2f2f2" />
<circle cx="436.70" cy="182.20" r="3.1" fill="#111" />
<circle cx="455.50" cy="182.20" r="7.0" fill="#d0d0d0" />
<circle cx="455.50" cy="182.20" r="6.3" fill="#f6f6f6" />
<circle cx="455.50" cy="182.20" r="5.0" fill="#a8a8a8" />
<circle cx="455.50" cy="182.20" r="4.5" fill="#f2f2f2" />
<circle cx="455.50" cy="182.20" r="3.1" fill="#111" />
<circle cx="474.40" cy="182.20" r="7.0" fill="#d0d0d0" />
<circle cx="474.40" cy="182.20" r="6.3" fill="#f6f6f6" />
<circle cx="474.40" cy="182.20" r="5.0" fill="#a8a8a8" />
<circle cx="474.40" cy="182.20" r="4.5" fill="#f2f2f2" />
<circle cx="474.40" cy="182.20" r="3.1" fill="#111" />
<circle cx="493.10" cy="182.20" r="7.0" fill="#d0d0d0" />
<circle cx="493.10" cy="182.20" r="6.3" fill="#f6f6f6" />
<circle cx="493.10" cy="182.20" r="5.0" fill="#a8a8a8" />
<circle cx="493.10" cy="182.20" r="4.5" fill="#f2f2f2" />
<circle cx="493.10" cy="182.20" r="3.1" fill="#111" />
<rect x="466.1" y="192.5" width="34.9" height="23.8" rx="1.5" fill="#6f6f6f"/>
<text x="418.5" y="198" font-family="Liberation Sans" font-size="5" font-weight="bold" fill="#111" text-anchor="middle" >TRIG</text>
<text x="436.7" y="198" font-family="Liberation Sans" font-size="5" font-weight="bold" fill="#111" text-anchor="middle" >LEVEL</text>
<text x="455.5" y="198" font-family="Liberation Sans" font-size="5" font-weight="bold" fill="#111" text-anchor="middle" >V/OCT</text>
<text x="474.4" y="198" font-family="Liberation Sans" font-size="5" font-weight="bold" fill="#f0f0f0" text-anchor="middle" >OUT</text>
<text x="493.1" y="198" font-family="Liberation Sans" font-size="5" font-weight="bold" fill="#f0f0f0" text-anchor="middle" >AUX</text>
<circle cx="418.50" cy="206.00" r="7.0" fill="#d0d0d0" />
<circle cx="418.50" cy="206.00" r="6.3" fill="#f6f6f6" />
<circle cx="418.50" cy="206.00" r="5.0" fill="#a8a8a8" />
<circle cx="418.50" cy="206.00" r="4.5" fill="#f2f2f2" />
<circle cx="418.50" cy="206.00" r="4.9" fill="#d0123c" />
<circle cx="418.50" cy="206.00" r="3.0" fill="#111" />
<circle cx="436.70" cy="206.00" r="7.0" fill="#d0d0d0" />
<circle cx="436.70" cy="206.00" r="6.3" fill="#f6f6f6" />
<circle cx="436.70" cy="206.00" r="5.0" fill="#a8a8a8" />
<circle cx="436.70" cy="206.00" r="4.5" fill="#f2f2f2" />
<circle cx="436.70" cy="206.00" r="3.1" fill="#111" />
<circle cx="455.50" cy="206.00" r="7.0" fill="#d0d0d0" />
<circle cx="455.50" cy="206.00" r="6.3" fill="#f6f6f6" />
<circle cx="455.50" cy="206.00" r="5.0" fill="#a8a8a8" />
<circle cx="455.50" cy="206.00" r="4.5" fill="#f2f2f2" />
<circle cx="455.50" cy="206.00" r="4.9" fill="#d8c000" />
<circle cx="455.50" cy="206.00" r="3.0" fill="#111" />
<circle cx="474.40" cy="206.00" r="7.0" fill="#d0d0d0" />
<circle cx="474.40" cy="206.00" r="6.3" fill="#f6f6f6" />
<circle cx="474.40" cy="206.00" r="5.0" fill="#a8a8a8" />
<circle cx="474.40" cy="206.00" r="4.5" fill="#f2f2f2" />
<circle cx="474.40" cy="206.00" r="4.9" fill="#0a9a14" />
<circle cx="474.40" cy="206.00" r="3.0" fill="#111" />
<circle cx="493.10" cy="206.00" r="7.0" fill="#d0d0d0" />
<circle cx="493.10" cy="206.00" r="6.3" fill="#f6f6f6" />
<circle cx="493.10" cy="206.00" r="5.0" fill="#a8a8a8" />
<circle cx="493.10" cy="206.00" r="4.5" fill="#f2f2f2" />
<circle cx="493.10" cy="206.00" r="3.1" fill="#111" />
<rect x="411" y="219.3" width="89" height="1" fill="#c8c8c8"/>
<rect x="406.9" y="224.3" width="29.5" height="10.3" fill="#6b6b6b"/>
<text x="411.5" y="232.5" font-family="Liberation Sans" font-size="7" font-weight="normal" fill="#f0f0f0" text-anchor="start" >1 mS</text>
<rect x="630.1" y="24" width="83" height="210.5" fill="#e8e8e8"/>
<rect x="630.1" y="24" width="3" height="210.5" fill="#ff0000"/>
<circle cx="643.50" cy="28.50" r="3.2" fill="#c8c8c8" stroke="#9a9a9a" stroke-width="0.6"/>
<path d="M641.5 28.5h4M643.5 26.5v4" stroke="#8a8a8a" stroke-width="0.9"/>
<circle cx="700.00" cy="28.50" r="3.2" fill="#c8c8c8" stroke="#9a9a9a" stroke-width="0.6"/>
<path d="M698.0 28.5h4M700 26.5v4" stroke="#8a8a8a" stroke-width="0.9"/>
<circle cx="694.00" cy="230.00" r="3.2" fill="#c8c8c8" stroke="#9a9a9a" stroke-width="0.6"/>
<path d="M692.0 230h4M694 228.0v4" stroke="#8a8a8a" stroke-width="0.9"/>
<text x="671.5" y="41.3" font-family="Liberation Sans" font-size="7.8" font-weight="bold" fill="#111" text-anchor="middle" >AUDIO</text>
<rect x="635.3" y="48.8" width="72.6" height="45.6" rx="3" fill="#000"/>
<path d="M636 63.8h71M636 79.3h71M672 79.3v15" stroke="#262626" stroke-width="0.6"/>
<text x="640.5" y="59" font-family="Liberation Mono" font-size="5.8" font-weight="normal" fill="#dcb41c" text-anchor="start" textLength="12.2" lengthAdjust="spacingAndGlyphs">ASIO</text>
<clipPath id="dc"><rect x="635.3" y="48.8" width="72.6" height="45.6"/></clipPath>
<text x="640.5" y="74.5" font-family="Liberation Mono" font-size="5.8" font-weight="normal" fill="#dcb41c" text-anchor="start" clip-path="url(#dc)" textLength="70.1" lengthAdjust="spacingAndGlyphs">JackRouter (1-4 in, 1-4</text>
<text x="640.5" y="89.5" font-family="Liberation Mono" font-size="5.8" font-weight="normal" fill="#dcb41c" text-anchor="start" textLength="24.4" lengthAdjust="spacingAndGlyphs">44.1 kHz</text>
<text x="676.5" y="89.5" font-family="Liberation Mono" font-size="5.8" font-weight="normal" fill="#dcb41c" text-anchor="start" textLength="9.1" lengthAdjust="spacingAndGlyphs">512</text>
<text x="671.5" y="105" font-family="Liberation Sans" font-size="5.2" font-weight="bold" fill="#222" text-anchor="middle" >INPUTS</text>
<text x="643.1" y="112" font-family="Liberation Sans" font-size="4" font-weight="normal" fill="#333" text-anchor="middle" >1</text>
<text x="643.1" y="136.5" font-family="Liberation Sans" font-size="4" font-weight="normal" fill="#333" text-anchor="middle" >5</text>
<text x="662" y="112" font-family="Liberation Sans" font-size="4" font-weight="normal" fill="#333" text-anchor="middle" >2</text>
<text x="662" y="136.5" font-family="Liberation Sans" font-size="4" font-weight="normal" fill="#333" text-anchor="middle" >6</text>
<text x="680.5" y="112" font-family="Liberation Sans" font-size="4" font-weight="normal" fill="#333" text-anchor="middle" >3</text>
<text x="680.5" y="136.5" font-family="Liberation Sans" font-size="4" font-weight="normal" fill="#333" text-anchor="middle" >7</text>
<text x="699.4" y="112" font-family="Liberation Sans" font-size="4" font-weight="normal" fill="#333" text-anchor="middle" >4</text>
<text x="699.4" y="136.5" font-family="Liberation Sans" font-size="4" font-weight="normal" fill="#333" text-anchor="middle" >8</text>
<path d="M648 122h9M685.5 122h9M648 145.8h9M685.5 145.8h9" stroke="#333" stroke-width="0.8"/>
<circle cx="652.50" cy="117.80" r="1.7" fill="#8de34a" />
<circle cx="690.00" cy="117.80" r="1.7" fill="#8de34a" />
<circle cx="652.50" cy="141.00" r="1.5" fill="#555" />
<circle cx="690.00" cy="141.00" r="1.5" fill="#555" />
<circle cx="643.10" cy="121.80" r="7.0" fill="#d0d0d0" />
<circle cx="643.10" cy="121.80" r="6.3" fill="#f6f6f6" />
<circle cx="643.10" cy="121.80" r="5.0" fill="#a8a8a8" />
<circle cx="643.10" cy="121.80" r="4.5" fill="#f2f2f2" />
<circle cx="643.10" cy="121.80" r="4.9" fill="#d0123c" />
<circle cx="643.10" cy="121.80" r="3.0" fill="#111" />
<circle cx="662.00" cy="121.80" r="7.0" fill="#d0d0d0" />
<circle cx="662.00" cy="121.80" r="6.3" fill="#f6f6f6" />
<circle cx="662.00" cy="121.80" r="5.0" fill="#a8a8a8" />
<circle cx="662.00" cy="121.80" r="4.5" fill="#f2f2f2" />
<circle cx="662.00" cy="121.80" r="4.9" fill="#0a9a14" />
<circle cx="662.00" cy="121.80" r="3.0" fill="#111" />
<circle cx="680.50" cy="121.80" r="7.0" fill="#d0d0d0" />
<circle cx="680.50" cy="121.80" r="6.3" fill="#f6f6f6" />
<circle cx="680.50" cy="121.80" r="5.0" fill="#a8a8a8" />
<circle cx="680.50" cy="121.80" r="4.5" fill="#f2f2f2" />
<circle cx="680.50" cy="121.80" r="3.1" fill="#111" />
<circle cx="699.40" cy="121.80" r="7.0" fill="#d0d0d0" />
<circle cx="699.40" cy="121.80" r="6.3" fill="#f6f6f6" />
<circle cx="699.40" cy="121.80" r="5.0" fill="#a8a8a8" />
<circle cx="699.40" cy="121.80" r="4.5" fill="#f2f2f2" />
<circle cx="699.40" cy="121.80" r="3.1" fill="#111" />
<circle cx="643.10" cy="145.80" r="7.0" fill="#d0d0d0" />
<circle cx="643.10" cy="145.80" r="6.3" fill="#f6f6f6" />
<circle cx="643.10" cy="145.80" r="5.0" fill="#a8a8a8" />
<circle cx="643.10" cy="145.80" r="4.5" fill="#f2f2f2" />
<circle cx="643.10" cy="145.80" r="3.1" fill="#111" />
<circle cx="662.00" cy="145.80" r="7.0" fill="#d0d0d0" />
<circle cx="662.00" cy="145.80" r="6.3" fill="#f6f6f6" />
<circle cx="662.00" cy="145.80" r="5.0" fill="#a8a8a8" />
<circle cx="662.00" cy="145.80" r="4.5" fill="#f2f2f2" />
<circle cx="662.00" cy="145.80" r="3.1" fill="#111" />
<circle cx="680.50" cy="145.80" r="7.0" fill="#d0d0d0" />
<circle cx="680.50" cy="145.80" r="6.3" fill="#f6f6f6" />
<circle cx="680.50" cy="145.80" r="5.0" fill="#a8a8a8" />
<circle cx="680.50" cy="145.80" r="4.5" fill="#f2f2f2" />
<circle cx="680.50" cy="145.80" r="3.1" fill="#111" />
<circle cx="699.40" cy="145.80" r="7.0" fill="#d0d0d0" />
<circle cx="699.40" cy="145.80" r="6.3" fill="#f6f6f6" />
<circle cx="699.40" cy="145.80" r="5.0" fill="#a8a8a8" />
<circle cx="699.40" cy="145.80" r="4.5" fill="#f2f2f2" />
<circle cx="699.40" cy="145.80" r="3.1" fill="#111" />
<text x="671.5" y="162.8" font-family="Liberation Sans" font-size="5.2" font-weight="bold" fill="#222" text-anchor="middle" >OUTPUTS</text>
<rect x="635.1" y="167.5" width="34.7" height="23.1" rx="2" fill="#0d0d0d"/>
<rect x="672.8" y="167.5" width="35.2" height="23.1" rx="2" fill="#0d0d0d"/>
<rect x="635.1" y="194" width="34.7" height="22.9" rx="2" fill="#0d0d0d"/>
<rect x="672.8" y="194" width="35.2" height="22.9" rx="2" fill="#0d0d0d"/>
<text x="643.6" y="173" font-family="Liberation Sans" font-size="4" font-weight="normal" fill="#eee" text-anchor="middle" >1</text>
<text x="643.6" y="199.5" font-family="Liberation Sans" font-size="4" font-weight="normal" fill="#eee" text-anchor="middle" >5</text>
<circle cx="643.60" cy="182.80" r="7.0" fill="#d0d0d0" />
<circle cx="643.60" cy="182.80" r="6.3" fill="#f6f6f6" />
<circle cx="643.60" cy="182.80" r="5.0" fill="#a8a8a8" />
<circle cx="643.60" cy="182.80" r="4.5" fill="#f2f2f2" />
<circle cx="643.60" cy="182.80" r="3.1" fill="#111" />
<circle cx="643.60" cy="208.60" r="7.0" fill="#d0d0d0" />
<circle cx="643.60" cy="208.60" r="6.3" fill="#f6f6f6" />
<circle cx="643.60" cy="208.60" r="5.0" fill="#a8a8a8" />
<circle cx="643.60" cy="208.60" r="4.5" fill="#f2f2f2" />
<circle cx="643.60" cy="208.60" r="3.1" fill="#111" />
<text x="662.3" y="173" font-family="Liberation Sans" font-size="4" font-weight="normal" fill="#eee" text-anchor="middle" >2</text>
<text x="662.3" y="199.5" font-family="Liberation Sans" font-size="4" font-weight="normal" fill="#eee" text-anchor="middle" >6</text>
<circle cx="662.30" cy="182.80" r="7.0" fill="#d0d0d0" />
<circle cx="662.30" cy="182.80" r="6.3" fill="#f6f6f6" />
<circle cx="662.30" cy="182.80" r="5.0" fill="#a8a8a8" />
<circle cx="662.30" cy="182.80" r="4.5" fill="#f2f2f2" />
<circle cx="662.30" cy="182.80" r="3.1" fill="#111" />
<circle cx="662.30" cy="208.60" r="7.0" fill="#d0d0d0" />
<circle cx="662.30" cy="208.60" r="6.3" fill="#f6f6f6" />
<circle cx="662.30" cy="208.60" r="5.0" fill="#a8a8a8" />
<circle cx="662.30" cy="208.60" r="4.5" fill="#f2f2f2" />
<circle cx="662.30" cy="208.60" r="3.1" fill="#111" />
<text x="681.3" y="173" font-family="Liberation Sans" font-size="4" font-weight="normal" fill="#eee" text-anchor="middle" >3</text>
<text x="681.3" y="199.5" font-family="Liberation Sans" font-size="4" font-weight="normal" fill="#eee" text-anchor="middle" >7</text>
<circle cx="681.30" cy="182.80" r="7.0" fill="#d0d0d0" />
<circle cx="681.30" cy="182.80" r="6.3" fill="#f6f6f6" />
<circle cx="681.30" cy="182.80" r="5.0" fill="#a8a8a8" />
<circle cx="681.30" cy="182.80" r="4.5" fill="#f2f2f2" />
<circle cx="681.30" cy="182.80" r="3.1" fill="#111" />
<circle cx="681.30" cy="208.60" r="7.0" fill="#d0d0d0" />
<circle cx="681.30" cy="208.60" r="6.3" fill="#f6f6f6" />
<circle cx="681.30" cy="208.60" r="5.0" fill="#a8a8a8" />
<circle cx="681.30" cy="208.60" r="4.5" fill="#f2f2f2" />
<circle cx="681.30" cy="208.60" r="3.1" fill="#111" />
<text x="700" y="173" font-family="Liberation Sans" font-size="4" font-weight="normal" fill="#eee" text-anchor="middle" >4</text>
<text x="700" y="199.5" font-family="Liberation Sans" font-size="4" font-weight="normal" fill="#eee" text-anchor="middle" >8</text>
<circle cx="700.00" cy="182.80" r="7.0" fill="#d0d0d0" />
<circle cx="700.00" cy="182.80" r="6.3" fill="#f6f6f6" />
<circle cx="700.00" cy="182.80" r="5.0" fill="#a8a8a8" />
<circle cx="700.00" cy="182.80" r="4.5" fill="#f2f2f2" />
<circle cx="700.00" cy="182.80" r="3.1" fill="#111" />
<circle cx="700.00" cy="208.60" r="7.0" fill="#d0d0d0" />
<circle cx="700.00" cy="208.60" r="6.3" fill="#f6f6f6" />
<circle cx="700.00" cy="208.60" r="5.0" fill="#a8a8a8" />
<circle cx="700.00" cy="208.60" r="4.5" fill="#f2f2f2" />
<circle cx="700.00" cy="208.60" r="3.1" fill="#111" />
<circle cx="652.90" cy="173.00" r="1.7" fill="#8de34a" />
<circle cx="690.60" cy="173.00" r="1.7" fill="#8de34a" />
<circle cx="652.90" cy="199.50" r="1.5" fill="#444" />
<circle cx="690.60" cy="199.50" r="1.5" fill="#444" />
<text x="671.6" y="228" font-family="Liberation Sans" font-size="8.5" font-weight="bold" fill="#111" text-anchor="middle" letter-spacing="0.2">vcv</text>
<rect x="633.1" y="224.3" width="27" height="10.4" fill="#6b6b6b"/>
<text x="636" y="232.5" font-family="Liberation Sans" font-size="6.5" font-weight="normal" fill="#f0f0f0" text-anchor="start" >987 mS</text>
<path d="M337.2 129.3Q396.35 215.24 455.5 206" stroke="#000" stroke-opacity="0.2" stroke-width="3" fill="none"/>
<path d="M337.2 129.3Q396.35 215.24 455.5 206" stroke="#c4b22a" stroke-opacity="0.78" stroke-width="2.2" fill="none"/>
<path d="M337.2 181.3Q377.85 230.60 418.5 206" stroke="#000" stroke-opacity="0.2" stroke-width="3" fill="none"/>
<path d="M337.2 181.3Q377.85 230.60 418.5 206" stroke="#c02a55" stroke-opacity="0.78" stroke-width="2.2" fill="none"/>
<path d="M474.4 206Q568.20 223.77 662 121.8" stroke="#000" stroke-opacity="0.2" stroke-width="3" fill="none"/>
<path d="M474.4 206Q568.20 223.77 662 121.8" stroke="#1a8a25" stroke-opacity="0.78" stroke-width="2.2" fill="none"/>
<path d="M474.4 206Q558.75 220.53 643.1 121.8" stroke="#000" stroke-opacity="0.2" stroke-width="3" fill="none"/>
<path d="M474.4 206Q558.75 220.53 643.1 121.8" stroke="#a82848" stroke-opacity="0.78" stroke-width="2.2" fill="none"/>
<circle cx="337.20" cy="129.30" r="4.9" fill="#d8c000" />
<circle cx="337.20" cy="129.30" r="3.0" fill="#111" />
<circle cx="337.20" cy="181.30" r="4.9" fill="#d0123c" />
<circle cx="337.20" cy="181.30" r="3.0" fill="#111" />
<circle cx="418.50" cy="206.00" r="4.9" fill="#d0123c" />
<circle cx="418.50" cy="206.00" r="3.0" fill="#111" />
<circle cx="455.50" cy="206.00" r="4.9" fill="#d8c000" />
<circle cx="455.50" cy="206.00" r="3.0" fill="#111" />
<circle cx="474.40" cy="206.00" r="4.9" fill="#0a9a14" />
<circle cx="474.40" cy="206.00" r="3.0" fill="#111" />
<circle cx="643.10" cy="121.80" r="4.9" fill="#d0123c" />
<circle cx="643.10" cy="121.80" r="3.0" fill="#111" />
<circle cx="662.00" cy="121.80" r="4.9" fill="#0a9a14" />
<circle cx="662.00" cy="121.80" r="3.0" fill="#111" />
</svg>
<div class="a" style="left:0;top:0;width:1035px;height:24.5px;background:linear-gradient(#a8b8c4 0,#a8b8c4 1px,#505050 1px,#505050 2.5px,#656565 2.5px,#646464 22.5px,#5a5a5a 22.5px)"></div>
<div class="tb" style="left:3.3px"><svg width="15" height="15"><path d="M4 2.5h4.5l2.5 2.5v8h-7z" fill="#d2d2d2"/><path d="M8.5 2.5v2.5h2.5" fill="#9a9a9a"/></svg></div>
<div class="tb" style="left:22.2px"><svg width="15" height="15"><path d="M2.5 5h3.5l1 1h4v6h-8.5z" fill="#bdbdbd"/><path d="M3.5 8h9l-1.5 4.5h-8.5z" fill="#dcdcdc"/></svg></div>
<div class="tb" style="left:41.1px"><svg width="15" height="15"><path d="M2.5 2.5h8.5l1.5 1.5v8.5h-10z" fill="#d2d2d2"/><path d="M5.5 2.5h3.5v2.5h-3.5z" fill="#555"/></svg></div>
<div class="tb" style="left:60.0px"><svg width="15" height="15"><path d="M2.5 2.5h8.5l1.5 1.5v8.5h-10z" fill="#d2d2d2"/><path d="M5.5 2.5h3.5v2.5h-3.5z" fill="#555"/><circle cx="7.3" cy="9" r="1.6" fill="#222"/></svg></div>
<div class="tb" style="left:78.9px"><svg width="15" height="15"><path d="M11.3 6.2A4.3 4.3 0 1 0 10.2 10.6" stroke="#dcdcdc" stroke-width="1.6" fill="none"/><path d="M8.6 5.5L12.5 4.2L12 8z" fill="#dcdcdc"/></svg></div>
<div class="tb" style="left:97.8px"><svg width="15" height="15"><path d="M4 13l1-4.5q-2-2 0-4l1.5 2q1.5 1 3-0.5l1-2.5 1.5 1-1 3.5q-0.5 3-2.5 5z" fill="#d0d0d0"/></svg></div>
<div class="tb" style="left:116.7px"><svg width="15" height="15"><path d="M2 8.5l2 0.5 2.5-4 2.5 5.5 2-3 2 1" stroke="#e0e0e0" stroke-width="1.4" fill="none"/></svg></div>
<div class="tb" style="left:135.6px"><svg width="15" height="15"><circle cx="7.3" cy="8.3" r="4" fill="none" stroke="#d8d8d8" stroke-width="1.3"/><path d="M6 2.6h2.6M7.3 8.3l1.5-1.5" stroke="#d8d8d8" stroke-width="1.2"/></svg></div>
<div class="tb" style="left:154.5px"><svg width="15" height="15"><path d="M4.5 7V5.3a2.8 2.8 0 0 1 5.6 0V7" stroke="#d8d8d8" stroke-width="1.4" fill="none"/><rect x="3.3" y="7" width="8" height="5.8" fill="#d8d8d8"/></svg></div>
<div class="sl" style="left:175px;width:112px"><i style="width:51px"></i><span>Cable opacity: 52%</span></div>
<div class="sl" style="left:292px;width:113px"><i style="width:20px"></i><span>Cable tension: 0.79</span></div>
<div class="sl" style="left:409px;width:113px"><i style="width:78px"></i><span>Zoom: 73%</span></div>
<div class="mb" style="left:527px;width:90px">Manage plugins</div>
<div class="mb" style="left:625px;width:90px">Update plugins</div>
<div class="mb" style="left:723px;width:87px">Log out</div>
<div class="a" style="left:1026.5px;top:25px;width:8px;height:286px;background:#838383;border-radius:4px"></div>
<div class="a" style="left:2px;top:526.7px;width:747px;height:10px;background:#848484;border-radius:5px"></div>
<style>
.win{position:absolute;border-radius:6px 6px 0 0;box-shadow:inset 0 0 0 1px #2a3036, inset 0 0 0 2px #9aa2aa}
.ttl{position:absolute;font-size:10.5px;color:#0e1520;white-space:nowrap}
.glow{position:absolute;border-radius:50%;background:radial-gradient(ellipse at center, rgba(200,205,210,.75), rgba(200,205,210,0) 70%)}
.cap{position:absolute;top:0;height:15px;border:1px solid #3a4048;border-top:none;background:linear-gradient(#7d848c,#5a6168);box-shadow:inset 0 0 0 1px rgba(255,255,255,.25)}
.con{position:absolute;font-family:"Liberation Mono",monospace;font-size:11px;line-height:9.08px;color:#c8c8c8;font-weight:bold;white-space:pre;letter-spacing:0;transform:scaleX(0.9186);transform-origin:0 0;text-shadow:0.4px 0 0 #c8c8c8}
.btn{position:absolute;white-space:nowrap;border:1px solid #707070;border-radius:3px;background:linear-gradient(#f2f2f2 0,#ebebeb 50%,#dddddd 51%,#cfcfcf 100%);font-size:10.5px;color:#000;white-space:nowrap;box-shadow:inset 0 0 0 1px rgba(255,255,255,.7)}
.btnh{border-color:#3c7fb1;background:linear-gradient(#eaf6fd 0,#d9f0fc 50%,#bee6fd 51%,#a7d9f5 100%)}
.tree{position:absolute;background:#fff;border:1px solid #828790}
.trh{position:absolute;white-space:nowrap;left:0;right:0;top:0;height:17px;background:linear-gradient(#fff,#f5fafd 50%,#e8f3fb);border-bottom:1px solid #d5e5f1;font-weight:bold;font-size:10.8px;color:#000;padding-left:3px;line-height:18px}
.ti{position:absolute;font-size:10.5px;font-weight:bold;white-space:nowrap}
</style>
<div class="win" style="left:-8px;top:243px;width:513px;height:257px;background:linear-gradient(#7a8189 0px,#565d64 3px,#454c53 10px,#4a5158 21px,#8e959b 22px,#50575e 23px,#4e555c 100%)"></div>
<div class="glow" style="left:-20px;top:244px;width:140px;height:28px"></div>
<div class="ttl" style="left:16px;top:248.8px"><span style="display:inline-block;transform:scaleX(0.85);transform-origin:0 0">Jack PortAudio</span></div>
<svg class="a" style="left:1px;top:248px" width="14" height="14"><path d="M1 12.5L11.5 2" stroke="#3a3020" stroke-width="3.2"/><path d="M1.5 12L11 2.5" stroke="#e8c840" stroke-width="1.8"/></svg>
<div class="cap" style="top:243px;left:421px;width:22px;border-radius:0 0 0 4px"><div class="a" style="left:7px;top:8px;width:8px;height:2px;background:#fff"></div></div>
<div class="cap" style="top:243px;left:442px;width:21px"><div class="a" style="left:6px;top:4px;width:8px;height:6px;border:1.5px solid #fff;border-top-width:2px"></div></div>
<div class="cap" style="top:243px;left:462px;width:37px;border-radius:0 0 4px 0"><div class="a" style="left:0;right:0;top:-1px;text-align:center;font-size:12px;font-weight:bold;color:#fff">x</div></div>
<div class="a" style="left:-2px;top:264.5px;width:501px;height:229.5px;border:1px solid #a8b0b8"></div>
<div class="a" style="left:0;top:265.5px;width:485px;height:227.5px;background:#000;overflow:hidden">
<div class="con" style="left:0;top:2.7px">self-connect-mode is &quot;Don&#x27;t restrict self connect requests&quot;
WARNING: Logging before InitGoogleLogging&lt;&gt; is written to STDERR
I0103 13:44:53.848007  5856 dllmain.cpp:43] Logging disabled. &lt;This shouldn&#x27;t lo
g.&gt;
I0103 13:44:53.849009  5856 wrapper.cpp:33] SarAsioWrapper::SarAsioWrapper
I0103 13:44:53.849009  5856 wrapper.cpp:39] SarAsioWrapper::init
I0103 13:44:53.849009  5856 tinyasio.cpp:31] Querying installed ASIO drivers.
I0103 13:44:53.849009  5856 tinyasio.cpp:75] Found ASIO driver: ASIO4ALL v2 with
 CLSID &lt;232685C6-6548-49D8-846D-4141A3EF7560&gt;
I0103 13:44:53.849009  5856 tinyasio.cpp:75] Found ASIO driver: FL Studio ASIO w
ith CLSID &lt;188135E1-7171-3434-854F-01A3C71F3DF9&gt;
I0103 13:44:53.849009  5856 tinyasio.cpp:75] Found ASIO driver: JackRouter with
CLSID &lt;838FE50A-C1AB-4B77-B9B6-0A40788B53F3&gt;
I0103 13:44:53.850008  5856 tinyasio.cpp:75] Found ASIO driver: Synchronous Audi
o Router with CLSID &lt;0569D852-1F6A-44A7-B7B5-EFB78B66BE21&gt;
I0103 13:44:53.850008  5856 tinyasio.cpp:75] Found ASIO driver: Voicemeeter Virt
ual ASIO with CLSID &lt;9175CF07-885D-46B4-9F01-4126D6648DF6&gt;
I0103 13:44:53.850008  5856 tinyasio.cpp:75] Found ASIO driver: 
 259
I0103 13:44:53.850008  5856 
I0103 13:44:53.850008  5856 
I0103 13:44:53.851008  5856 
I0103 13:44:53.851008  5856 
I0103 13:44:53.851008  5856 </div>
</div>
<div class="a" style="left:485px;top:265.5px;width:13px;height:227.5px;background:linear-gradient(90deg,#e3e3e3,#f4f4f4)"></div>
<svg class="a" style="left:487px;top:270px" width="9" height="6"><path d="M1 5L4.5 1.5L8 5" stroke="#222" stroke-width="1.5" fill="none"/></svg>
<div class="a" style="left:486px;top:285px;width:11px;height:18px;border:1px solid #9a9a9a;border-radius:2px;background:linear-gradient(90deg,#eaeaea,#d8d8d8)"></div>
<div class="a" style="left:489px;top:291px;width:5px;height:5px;border-top:1px solid #777;border-bottom:1px solid #777"></div>
<div class="win" style="left:506px;top:243px;width:416px;height:281.5px;background:linear-gradient(#7a8189 0px,#565d64 3px,#454c53 9px,#4a5158 20px,#8e959b 21px,#50575e 22px,#4e555c 100%)"></div>
<div class="glow" style="left:505px;top:244px;width:220px;height:26px"></div>
<svg class="a" style="left:511px;top:249px" width="13" height="11"><path d="M2 1Q11 5.5 2 10M11 1Q2 5.5 11 10M0.5 5.5h12" stroke="#d83a10" stroke-width="1.6" fill="none"/></svg>
<div class="ttl" style="left:527px;top:248.5px"><span style="display:inline-block;transform:scaleX(0.862);transform-origin:0 0">Connections - JACK Audio Connection Kit</span></div>
<div class="cap" style="top:243px;left:840px;width:22px;border-radius:0 0 0 4px"><div class="a" style="left:7px;top:8px;width:8px;height:2px;background:#fff"></div></div>
<div class="cap" style="top:243px;left:861px;width:21px"><div class="a" style="left:5.5px;top:4px;width:9px;height:7px;border:1.5px solid #fff;border-top-width:2px"></div></div>
<div class="cap" style="top:243px;left:881px;width:36px;border-radius:0 0 4px 0"><div class="a" style="left:0;right:0;top:-1px;text-align:center;font-size:12px;font-weight:bold;color:#fff">x</div></div>
<div class="a" style="left:510px;top:264px;width:406px;height:252px;background:#f0f0f0;border:1px solid #3a4046;box-shadow:0 0 0 1px #a8b0b8"></div>
<div class="a" style="left:513px;top:283px;width:399px;height:231px;background:#fff;border:1px solid #b0b0b0"></div>
<div class="a" style="left:554px;top:270px;width:33px;height:14px;border:1px solid #a0a0a0;border-bottom:none;background:linear-gradient(#f4f4f4,#dcdcdc);font-size:10px;padding-left:7px;line-height:16px"><span style="display:inline-block;transform:scaleX(0.83);transform-origin:0 0">MIDI</span></div>
<div class="a" style="left:515px;top:267px;width:40px;height:17px;border:1px solid #a0a0a0;border-bottom:none;background:#fff;font-size:10px;padding-left:7px;line-height:18px"><span style="display:inline-block;transform:scaleX(0.79);transform-origin:0 0">Audio</span></div>
<div class="tree" style="left:518px;top:288px;width:166px;height:193px"></div>
<div class="a trh" style="left:519px;top:289px;width:164px;right:auto"><span style="display:inline-block;transform:scaleX(0.93);transform-origin:0 0">Readable Clients / Output Ports</span></div>
<svg class="a" style="left:597px;top:287px" width="7" height="4"><path d="M0.5 3.5L3.5 0.5L6.5 3.5" stroke="#4a6a90" stroke-width="1" fill="none"/></svg>
<div class="tree" style="left:741px;top:288px;width:166px;height:193px"></div>
<div class="a trh" style="left:742px;top:289px;width:152px;right:auto"><span style="display:inline-block;transform:scaleX(0.93);transform-origin:0 0">Writable Clients / Input Ports</span></div>
<svg class="a" style="left:815px;top:287px" width="7" height="4"><path d="M0.5 3.5L3.5 0.5L6.5 3.5" stroke="#4a6a90" stroke-width="1" fill="none"/></svg>
<div class="a" style="left:894px;top:289px;width:12px;height:191px;background:linear-gradient(90deg,#e6e6e6,#f2f2f2)"></div>
<svg class="a" style="left:896px;top:293px" width="8" height="5"><path d="M0.5 4.5L4 1L7.5 4.5z" fill="#333"/></svg>
<svg class="a" style="left:896px;top:472px" width="8" height="5"><path d="M0.5 0.5L4 4L7.5 0.5z" fill="#333"/></svg>
<div class="a" style="left:895px;top:302.5px;width:10px;height:114px;border:1px solid #a8a8a8;border-radius:2px;background:linear-gradient(90deg,#ececec,#dadada)"></div>
<div class="a" style="left:897px;top:357px;width:6px;height:5px;border-top:1px solid #777;border-bottom:1px solid #777"></div>
<div class="a" style="left:535px;top:307px;width:148px;height:14px;background:linear-gradient(#f6f6f6,#e4e4e4);border:1px solid #dadada;border-radius:2px"></div>
<svg class="a" style="left:525.5px;top:311.2px" width="6" height="6"><path d="M4.8 0.5V4.5H0.5Z" fill="#262626"/></svg>
<svg class="a" style="left:537px;top:308.2px" width="13" height="11"><rect x="0.5" y="0.5" width="11.5" height="10" rx="1" fill="#202020" stroke="#8a8a8a"/><rect x="1" y="1" width="10.5" height="2" fill="#2030a0"/><path d="M2 6.5l1.5-1 1.5 2 1.5-2.5 1.5 2.5 1.5-1.5 1.2 0.5" stroke="#e02010" stroke-width="1" fill="none"/></svg>
<div class="ti" style="left:553px;top:307.7px;color:#1a1a80"><span style="display:inline-block;transform:scaleX(0.93);transform-origin:0 0">FL64</span></div>
<svg class="a" style="left:552px;top:321.36px" width="14" height="14"><path d="M0.5 13L3 10.5M9.5 4L13 0.5" stroke="#202020" stroke-width="1.1"/><path d="M8 5.5L10.5 3" stroke="#707070" stroke-width="2"/><path d="M3 10.5L8 5.5" stroke="#303010" stroke-width="4.4"/><path d="M3.2 10.3L7.8 5.7" stroke="#f0e800" stroke-width="3"/></svg>
<div class="ti" style="left:569px;top:321.4px;color:#0000f0"><span style="display:inline-block;transform:scaleX(0.93);transform-origin:0 0">out1</span></div>
<svg class="a" style="left:552px;top:335.02px" width="14" height="14"><path d="M0.5 13L3 10.5M9.5 4L13 0.5" stroke="#202020" stroke-width="1.1"/><path d="M8 5.5L10.5 3" stroke="#707070" stroke-width="2"/><path d="M3 10.5L8 5.5" stroke="#303010" stroke-width="4.4"/><path d="M3.2 10.3L7.8 5.7" stroke="#f0e800" stroke-width="3"/></svg>
<div class="ti" style="left:569px;top:335.0px;color:#0000f0"><span style="display:inline-block;transform:scaleX(0.93);transform-origin:0 0">out2</span></div>
<svg class="a" style="left:525.5px;top:352.18px" width="6" height="6"><path d="M4.8 0.5V4.5H0.5Z" fill="#262626"/></svg>
<svg class="a" style="left:537px;top:349.18px" width="13" height="11"><rect x="0.5" y="0.5" width="11.5" height="10" rx="1" fill="#202020" stroke="#8a8a8a"/><rect x="1" y="1" width="10.5" height="2" fill="#2030a0"/><path d="M2 6.5l1.5-1 1.5 2 1.5-2.5 1.5 2.5 1.5-1.5 1.2 0.5" stroke="#e02010" stroke-width="1" fill="none"/></svg>
<div class="ti" style="left:553px;top:348.7px;color:#000"><span style="display:inline-block;transform:scaleX(0.93);transform-origin:0 0">Rack</span></div>
<svg class="a" style="left:552px;top:362.34px" width="14" height="14"><path d="M0.5 13L3 10.5M9.5 4L13 0.5" stroke="#202020" stroke-width="1.1"/><path d="M8 5.5L10.5 3" stroke="#707070" stroke-width="2"/><path d="M3 10.5L8 5.5" stroke="#303010" stroke-width="4.4"/><path d="M3.2 10.3L7.8 5.7" stroke="#f0e800" stroke-width="3"/></svg>
<div class="ti" style="left:569px;top:362.3px;color:#000"><span style="display:inline-block;transform:scaleX(0.93);transform-origin:0 0">out1</span></div>
<svg class="a" style="left:552px;top:376.0px" width="14" height="14"><path d="M0.5 13L3 10.5M9.5 4L13 0.5" stroke="#202020" stroke-width="1.1"/><path d="M8 5.5L10.5 3" stroke="#707070" stroke-width="2"/><path d="M3 10.5L8 5.5" stroke="#303010" stroke-width="4.4"/><path d="M3.2 10.3L7.8 5.7" stroke="#f0e800" stroke-width="3"/></svg>
<div class="ti" style="left:569px;top:376.0px;color:#000"><span style="display:inline-block;transform:scaleX(0.93);transform-origin:0 0">out2</span></div>
<svg class="a" style="left:552px;top:389.65999999999997px" width="14" height="14"><path d="M0.5 13L3 10.5M9.5 4L13 0.5" stroke="#202020" stroke-width="1.1"/><path d="M8 5.5L10.5 3" stroke="#707070" stroke-width="2"/><path d="M3 10.5L8 5.5" stroke="#303010" stroke-width="4.4"/><path d="M3.2 10.3L7.8 5.7" stroke="#f0e800" stroke-width="3"/></svg>
<div class="ti" style="left:569px;top:389.7px;color:#000"><span style="display:inline-block;transform:scaleX(0.93);transform-origin:0 0">out3</span></div>
<svg class="a" style="left:552px;top:403.32px" width="14" height="14"><path d="M0.5 13L3 10.5M9.5 4L13 0.5" stroke="#202020" stroke-width="1.1"/><path d="M8 5.5L10.5 3" stroke="#707070" stroke-width="2"/><path d="M3 10.5L8 5.5" stroke="#303010" stroke-width="4.4"/><path d="M3.2 10.3L7.8 5.7" stroke="#f0e800" stroke-width="3"/></svg>
<div class="ti" style="left:569px;top:403.3px;color:#000"><span style="display:inline-block;transform:scaleX(0.93);transform-origin:0 0">out4</span></div>
<svg class="a" style="left:525.5px;top:420.48px" width="6" height="6"><path d="M4.8 0.5V4.5H0.5Z" fill="#262626"/></svg>
<svg class="a" style="left:537px;top:417.48px" width="13" height="11"><rect x="0.5" y="0.5" width="11.5" height="10" rx="1" fill="#202020" stroke="#8a8a8a"/><rect x="1" y="1" width="10.5" height="2" fill="#2030a0"/><path d="M2 6.5l1.5-1 1.5 2 1.5-2.5 1.5 2.5 1.5-1.5 1.2 0.5" stroke="#e02010" stroke-width="1" fill="none"/></svg>
<div class="ti" style="left:553px;top:417.0px;color:#000"><span style="display:inline-block;transform:scaleX(0.93);transform-origin:0 0">system</span></div>
<svg class="a" style="left:552px;top:430.64px" width="13" height="14"><path d="M0.5 13L5 8.5" stroke="#505050" stroke-width="0.9"/><path d="M3.5 10L9.5 4" stroke="#1a8a98" stroke-width="3.2"/><path d="M4 9.5L9 4.5" stroke="#6ad0d8" stroke-width="1"/><circle cx="10" cy="3.2" r="2.4" fill="#d8d860" stroke="#303030" stroke-width="0.8"/><path d="M7 9.5q1.5 1-0.5 1.5q2 0.5 1.5 2" stroke="#202020" stroke-width="0.9" fill="none"/></svg>
<div class="ti" style="left:569px;top:430.6px;color:#000"><span style="display:inline-block;transform:scaleX(0.93);transform-origin:0 0">capture_1</span></div>
<svg class="a" style="left:552px;top:444.29999999999995px" width="13" height="14"><path d="M0.5 13L5 8.5" stroke="#505050" stroke-width="0.9"/><path d="M3.5 10L9.5 4" stroke="#1a8a98" stroke-width="3.2"/><path d="M4 9.5L9 4.5" stroke="#6ad0d8" stroke-width="1"/><circle cx="10" cy="3.2" r="2.4" fill="#d8d860" stroke="#303030" stroke-width="0.8"/><path d="M7 9.5q1.5 1-0.5 1.5q2 0.5 1.5 2" stroke="#202020" stroke-width="0.9" fill="none"/></svg>
<div class="ti" style="left:569px;top:444.3px;color:#000"><span style="display:inline-block;transform:scaleX(0.93);transform-origin:0 0">capture_2</span></div>
<div class="a" style="left:758px;top:416px;width:136px;height:14px;background:linear-gradient(#f6f6f6,#e4e4e4);border:1px solid #dadada;border-radius:2px"></div>
<div class="a" style="left:742px;top:306px;width:152px;height:174px;overflow:hidden">
<svg class="a" style="left:6.5px;top:5.199999999999989px" width="6" height="6"><path d="M4.8 0.5V4.5H0.5Z" fill="#262626"/></svg>
<svg class="a" style="left:18px;top:2.1999999999999886px" width="13" height="11"><rect x="0.5" y="0.5" width="11.5" height="10" rx="1" fill="#202020" stroke="#8a8a8a"/><rect x="1" y="1" width="10.5" height="2" fill="#2030a0"/><path d="M2 6.5l1.5-1 1.5 2 1.5-2.5 1.5 2.5 1.5-1.5 1.2 0.5" stroke="#20c040" stroke-width="1" fill="none"/></svg>
<div class="ti" style="left:34px;top:1.7px;color:#000"><span style="display:inline-block;transform:scaleX(0.93);transform-origin:0 0">FL64</span></div>
<svg class="a" style="left:33px;top:15.360000000000014px" width="14" height="14"><path d="M0.5 0.5L3 3M9.5 9.5L13 13" stroke="#202020" stroke-width="1.1"/><path d="M3 3L5.5 5.5" stroke="#707070" stroke-width="2"/><path d="M5.5 5.5L10.5 10.5" stroke="#303010" stroke-width="4.4"/><path d="M5.7 5.7L10.3 10.3" stroke="#f0e800" stroke-width="3"/></svg>
<div class="ti" style="left:50px;top:15.4px;color:#000"><span style="display:inline-block;transform:scaleX(0.93);transform-origin:0 0">in1</span></div>
<svg class="a" style="left:33px;top:29.019999999999982px" width="14" height="14"><path d="M0.5 0.5L3 3M9.5 9.5L13 13" stroke="#202020" stroke-width="1.1"/><path d="M3 3L5.5 5.5" stroke="#707070" stroke-width="2"/><path d="M5.5 5.5L10.5 10.5" stroke="#303010" stroke-width="4.4"/><path d="M5.7 5.7L10.3 10.3" stroke="#f0e800" stroke-width="3"/></svg>
<div class="ti" style="left:50px;top:29.0px;color:#000"><span style="display:inline-block;transform:scaleX(0.93);transform-origin:0 0">in2</span></div>
<svg class="a" style="left:6.5px;top:46.18000000000001px" width="6" height="6"><path d="M4.8 0.5V4.5H0.5Z" fill="#262626"/></svg>
<svg class="a" style="left:18px;top:43.18000000000001px" width="13" height="11"><rect x="0.5" y="0.5" width="11.5" height="10" rx="1" fill="#202020" stroke="#8a8a8a"/><rect x="1" y="1" width="10.5" height="2" fill="#2030a0"/><path d="M2 6.5l1.5-1 1.5 2 1.5-2.5 1.5 2.5 1.5-1.5 1.2 0.5" stroke="#20c040" stroke-width="1" fill="none"/></svg>
<div class="ti" style="left:34px;top:42.7px;color:#000"><span style="display:inline-block;transform:scaleX(0.93);transform-origin:0 0">Rack</span></div>
<svg class="a" style="left:33px;top:56.339999999999975px" width="14" height="14"><path d="M0.5 0.5L3 3M9.5 9.5L13 13" stroke="#202020" stroke-width="1.1"/><path d="M3 3L5.5 5.5" stroke="#707070" stroke-width="2"/><path d="M5.5 5.5L10.5 10.5" stroke="#303010" stroke-width="4.4"/><path d="M5.7 5.7L10.3 10.3" stroke="#f0e800" stroke-width="3"/></svg>
<div class="ti" style="left:50px;top:56.3px;color:#000"><span style="display:inline-block;transform:scaleX(0.93);transform-origin:0 0">in1</span></div>
<svg class="a" style="left:33px;top:70.0px" width="14" height="14"><path d="M0.5 0.5L3 3M9.5 9.5L13 13" stroke="#202020" stroke-width="1.1"/><path d="M3 3L5.5 5.5" stroke="#707070" stroke-width="2"/><path d="M5.5 5.5L10.5 10.5" stroke="#303010" stroke-width="4.4"/><path d="M5.7 5.7L10.3 10.3" stroke="#f0e800" stroke-width="3"/></svg>
<div class="ti" style="left:50px;top:70.0px;color:#000"><span style="display:inline-block;transform:scaleX(0.93);transform-origin:0 0">in2</span></div>
<svg class="a" style="left:33px;top:83.65999999999997px" width="14" height="14"><path d="M0.5 0.5L3 3M9.5 9.5L13 13" stroke="#202020" stroke-width="1.1"/><path d="M3 3L5.5 5.5" stroke="#707070" stroke-width="2"/><path d="M5.5 5.5L10.5 10.5" stroke="#303010" stroke-width="4.4"/><path d="M5.7 5.7L10.3 10.3" stroke="#f0e800" stroke-width="3"/></svg>
<div class="ti" style="left:50px;top:83.7px;color:#000"><span style="display:inline-block;transform:scaleX(0.93);transform-origin:0 0">in3</span></div>
<svg class="a" style="left:33px;top:97.32px" width="14" height="14"><path d="M0.5 0.5L3 3M9.5 9.5L13 13" stroke="#202020" stroke-width="1.1"/><path d="M3 3L5.5 5.5" stroke="#707070" stroke-width="2"/><path d="M5.5 5.5L10.5 10.5" stroke="#303010" stroke-width="4.4"/><path d="M5.7 5.7L10.3 10.3" stroke="#f0e800" stroke-width="3"/></svg>
<div class="ti" style="left:50px;top:97.3px;color:#000"><span style="display:inline-block;transform:scaleX(0.93);transform-origin:0 0">in4</span></div>
<svg class="a" style="left:6.5px;top:114.48000000000002px" width="6" height="6"><path d="M4.8 0.5V4.5H0.5Z" fill="#262626"/></svg>
<svg class="a" style="left:18px;top:111.48000000000002px" width="13" height="11"><rect x="0.5" y="0.5" width="11.5" height="10" rx="1" fill="#202020" stroke="#8a8a8a"/><rect x="1" y="1" width="10.5" height="2" fill="#2030a0"/><path d="M2 6.5l1.5-1 1.5 2 1.5-2.5 1.5 2.5 1.5-1.5 1.2 0.5" stroke="#20c040" stroke-width="1" fill="none"/></svg>
<div class="ti" style="left:34px;top:111.0px;color:#1a1a80"><span style="display:inline-block;transform:scaleX(0.93);transform-origin:0 0">system</span></div>
<svg class="a" style="left:33px;top:124.13999999999999px" width="14" height="14"><path d="M1 6.5L7.2 1v11z" fill="#eee820" stroke="#202020" stroke-width="0.9" stroke-linejoin="round"/><path d="M7.2 1v11" stroke="#101010" stroke-width="1.6"/><path d="M9 6.5h3.5M9 4.5l2.5-2.5M9 8.5l2.5 2.5" stroke="#9a9a9a" stroke-width="0.9"/></svg>
<div class="ti" style="left:50px;top:124.6px;color:#0000f0"><span style="display:inline-block;transform:scaleX(0.93);transform-origin:0 0">playback_1</span></div>
<svg class="a" style="left:33px;top:137.79999999999995px" width="14" height="14"><path d="M1 6.5L7.2 1v11z" fill="#eee820" stroke="#202020" stroke-width="0.9" stroke-linejoin="round"/><path d="M7.2 1v11" stroke="#101010" stroke-width="1.6"/><path d="M9 6.5h3.5M9 4.5l2.5-2.5M9 8.5l2.5 2.5" stroke="#9a9a9a" stroke-width="0.9"/></svg>
<div class="ti" style="left:50px;top:138.3px;color:#0000f0"><span style="display:inline-block;transform:scaleX(0.93);transform-origin:0 0">playback_2</span></div>
<svg class="a" style="left:33px;top:151.45999999999998px" width="14" height="14"><path d="M1 6.5L7.2 1v11z" fill="#eee820" stroke="#202020" stroke-width="0.9" stroke-linejoin="round"/><path d="M7.2 1v11" stroke="#101010" stroke-width="1.6"/><path d="M9 6.5h3.5M9 4.5l2.5-2.5M9 8.5l2.5 2.5" stroke="#9a9a9a" stroke-width="0.9"/></svg>
<div class="ti" style="left:50px;top:152.0px;color:#000"><span style="display:inline-block;transform:scaleX(0.93);transform-origin:0 0">playback_3</span></div>
<svg class="a" style="left:33px;top:165.12px" width="14" height="14"><path d="M1 6.5L7.2 1v11z" fill="#eee820" stroke="#202020" stroke-width="0.9" stroke-linejoin="round"/><path d="M7.2 1v11" stroke="#101010" stroke-width="1.6"/><path d="M9 6.5h3.5M9 4.5l2.5-2.5M9 8.5l2.5 2.5" stroke="#9a9a9a" stroke-width="0.9"/></svg>
<div class="ti" style="left:50px;top:165.6px;color:#000"><span style="display:inline-block;transform:scaleX(0.93);transform-origin:0 0">playback_4</span></div>
</div>
<svg class="a" style="left:684px;top:300px" width="58" height="170"><g fill="none" stroke-width="1.1"><path d="M1 26.5h4l47 110.5h5" stroke="#c86a6a"/><path d="M1 40h4l47 110.5h5" stroke="#c86a6a"/><path d="M1 68h4l47-41.5h5" stroke="#c86a6a"/><path d="M1 82h4l47-42h5" stroke="#c86a6a"/><path d="M1 26.5h4l47 110.5h5" stroke="#501818" stroke-width="1.6"/><path d="M1 40h4l47 110.5h5" stroke="#501818" stroke-width="1.6"/></g></svg>
<div class="btn" style="left:522px;top:488px;width:55px;height:17px;color:#8a8a8a;border-color:#b8b8b8;background:#f2f2f2;"><svg class="a" style="left:6px;top:3px" width="12" height="10"><path d="M1 9L8 2M6 8l5-5" stroke="#999" stroke-width="1.5"/></svg><div class="a" style="left:20px;top:0.5px;line-height:14px"><span style="display:inline-block;transform:scaleX(0.77);transform-origin:0 0">Connect</span></div></div>
<div class="btn" style="left:582px;top:488px;width:59px;height:17px;"><svg class="a" style="left:3px;top:3px" width="11" height="11"><path d="M1.5 1.5L9.5 9.5M9.5 1.5L1.5 9.5" stroke="#c82810" stroke-width="1.8"/></svg><div class="a" style="left:16px;top:0.5px;line-height:14px"><span style="display:inline-block;transform:scaleX(0.77);transform-origin:0 0">Disconnect</span></div></div>
<div class="btn" style="left:646px;top:488px;width:70px;height:17px;"><svg class="a" style="left:3px;top:3px" width="11" height="11"><path d="M1.5 1.5L9.5 9.5M9.5 1.5L1.5 9.5M7 1.5h3v3" stroke="#c82810" stroke-width="1.8" fill="none"/></svg><div class="a" style="left:16px;top:0.5px;line-height:14px"><span style="display:inline-block;transform:scaleX(0.77);transform-origin:0 0">Disconnect All</span></div></div>
<div class="btn" style="left:753px;top:488px;width:58px;height:17px;"><svg class="a" style="left:4px;top:3px" width="11" height="11"><path d="M9 1.5Q3 1.5 3 5.5Q3 9.5 9 9.5M1 5.5h9" stroke="#1060c0" stroke-width="1.8" fill="none"/></svg><div class="a" style="left:16px;top:0.5px;line-height:14px"><span style="display:inline-block;transform:scaleX(0.77);transform-origin:0 0">Expand All</span></div></div>
<div class="btn" style="left:848px;top:488px;width:55px;height:17px;"><svg class="a" style="left:6px;top:2px" width="11" height="12"><path d="M7 3A4 4 0 1 0 9 5" stroke="#1060c0" stroke-width="2" fill="none"/><path d="M5.5 0.5L9 3L5.5 5.5z" fill="#1060c0"/></svg><div class="a" style="left:20px;top:0.5px;line-height:14px"><span style="display:inline-block;transform:scaleX(0.77);transform-origin:0 0">Refresh</span></div></div>
<div class="win" style="left:168px;top:420px;width:336px;height:103px;background:linear-gradient(#a0a6ac 0px,#7c838a 3px,#686f76 9px,#5e656c 18px,#9aa1a7 20px,#8d949a 50px,#a0a7ad 100%)"></div>
<div class="glow" style="left:170px;top:420px;width:250px;height:22px;background:radial-gradient(ellipse at center, rgba(215,220,224,.8), rgba(215,220,224,.35) 55%, rgba(215,220,224,0) 75%)"></div>
<svg class="a" style="left:173px;top:423px" width="14" height="15"><path d="M2.5 2.5L12 13" stroke="#3a3020" stroke-width="3.2"/><path d="M3 3L11.5 12.5" stroke="#e8c840" stroke-width="1.8"/></svg>
<div class="ttl" style="left:190px;top:424.5px"><span style="display:inline-block;transform:scaleX(0.867);transform-origin:0 0">JACK Audio Connection Kit [(default)] Active.</span></div>
<div class="cap" style="top:420px;left:421px;width:22px;height:15px;border-radius:0 0 0 4px"><div class="a" style="left:7px;top:8px;width:8px;height:2px;background:#fff"></div></div>
<div class="cap" style="top:420px;left:442px;width:21px;height:15px"><div class="a" style="left:6px;top:4px;width:8px;height:6px;border:1.5px solid #fff;border-top-width:2px"></div></div>
<div class="cap" style="top:420px;left:462px;width:38px;height:15px;border-radius:0 0 4px 0;background:linear-gradient(#e8a090,#c84a30 50%,#b03018 51%,#d06040)"><div class="a" style="left:0;right:0;top:-1px;text-align:center;font-size:12px;font-weight:bold;color:#fff">x</div></div>
<div class="a" style="left:173px;top:441px;width:324px;height:76px;background:#f0f0f0;border:1px solid #8f969e"></div>
<div class="btn" style="left:177px;top:445px;width:60px;height:20px;color:#8a8a8a;border-color:#b8b8b8;background:#f2f2f2;"><svg class="a" style="left:5px;top:3px" width="12" height="13"><path d="M1 1L11 6.5L1 12z" fill="#9a9a9a"/></svg><div class="a" style="left:18px;top:2.0px;line-height:14px"><span style="display:inline-block;transform:scaleX(0.8);transform-origin:0 0">Start</span></div></div>
<div class="btn" style="left:241px;top:445px;width:58px;height:20px;"><svg class="a" style="left:5px;top:4px" width="11" height="11"><rect x="0" y="0" width="10" height="10" fill="#e00000"/></svg><div class="a" style="left:18px;top:2.0px;line-height:14px"><span style="display:inline-block;transform:scaleX(0.8);transform-origin:0 0">Stop</span></div></div>
<div class="btn" style="left:177px;top:470px;width:60px;height:20px;"><svg class="a" style="left:3px;top:3px" width="13" height="13"><rect x="1.5" y="2.5" width="10" height="8" fill="none" stroke="#2050c0" stroke-width="1.3"/><path d="M4 5h5M4 7.5h5" stroke="#2050c0"/><path d="M1 1v11" stroke="#2050c0" stroke-width="1.2"/></svg><div class="a" style="left:16px;top:2.0px;line-height:14px"><span style="display:inline-block;transform:scaleX(0.8);transform-origin:0 0">Messages</span></div></div>
<div class="btn" style="left:241px;top:470px;width:58px;height:20px;"><svg class="a" style="left:4px;top:4px" width="13" height="11"><path d="M1 2.5h4l1 1.5h6v6H1z" fill="#fff" stroke="#2050c0" stroke-width="1.2"/></svg><div class="a" style="left:18px;top:2.0px;line-height:14px"><span style="display:inline-block;transform:scaleX(0.8);transform-origin:0 0">Session</span></div></div>
<div class="btn btnh" style="left:177px;top:494px;width:60px;height:20px;"><svg class="a" style="left:5px;top:4px" width="13" height="11"><path d="M2 0.5Q11 5.5 2 10.5M11 0.5Q2 5.5 11 10.5M0.5 5.5h12" stroke="#d83a10" stroke-width="1.5" fill="none"/></svg><div class="a" style="left:19px;top:2.0px;line-height:14px"><span style="display:inline-block;transform:scaleX(0.8);transform-origin:0 0">Connect</span></div></div>
<div class="btn" style="left:241px;top:494px;width:58px;height:20px;"><svg class="a" style="left:4px;top:4px" width="12" height="12"><path d="M1.5 1.5L10.5 10.5V1.5L1.5 10.5z" fill="none" stroke="#2050c0" stroke-width="1.6"/></svg><div class="a" style="left:17px;top:2.0px;line-height:14px"><span style="display:inline-block;transform:scaleX(0.8);transform-origin:0 0">Patchbay</span></div></div>
<div class="a" style="left:303px;top:445px;width:132px;height:44px;background:radial-gradient(ellipse at 10% 0%,#3c3c3c,#0c0c0c 60%);border:1px solid #222;overflow:hidden">
<div class="a" style="left:1px;top:2px;width:2px;height:18px;background:linear-gradient(#c0c8c8,transparent)"></div>
<svg class="a" style="left:0;top:0" width="132" height="44">
<text x="3" y="11.199999999999989" font-family="Liberation Sans" font-size="6" font-weight="bold" fill="#e2e21e" >Active</text>
<text x="43" y="11.199999999999989" font-family="Liberation Sans" font-size="6" font-weight="bold" fill="#8a8a1e" >RT</text>
<text x="66" y="11.199999999999989" font-family="Liberation Sans" font-size="6" font-weight="bold" fill="#f2f21e" >2.4 %</text>
<text x="106.60000000000002" y="11.199999999999989" font-family="Liberation Sans" font-size="5.7" font-weight="bold" fill="#8a8a1e" >44100 Hz</text>
<text x="3" y="25.399999999999977" font-family="Liberation Sans" font-size="6.5"  fill="#1f6e1f" >0 (0)</text>
<text x="80.89999999999998" y="26.80000000000001" font-family="Liberation Sans" font-size="12.3" font-weight="bold" fill="#12e012" >00:00:00</text>
<text x="3.8000000000000114" y="39" font-family="Liberation Sans" font-size="6" font-weight="bold" fill="#22d022" >Stopped</text>
<text x="53" y="39" font-family="Liberation Sans" font-size="6" font-weight="bold" fill="#22d022" >--</text>
<text x="116" y="38.5" font-family="Liberation Sans" font-size="6" font-weight="bold" fill="#22d022" >-:-:---</text>
</svg>
</div>
<div class="btn" style="left:303px;top:494px;width:23px;height:20px"><svg class="a" style="left:5px;top:3px" width="12" height="13"><rect x="1" y="1.5" width="2" height="10" fill="#8a8a8a"/><path d="M11 1.5L3.5 6.5L11 11.5z" fill="#8a8a8a"/></svg></div>
<div class="btn" style="left:331px;top:494px;width:23px;height:20px"><svg class="a" style="left:5px;top:3px" width="13" height="13"><path d="M6.5 1.5L1 6.5L6.5 11.5zM12 1.5L6.5 6.5L12 11.5z" fill="#8a8a8a"/></svg></div>
<div class="btn" style="left:358px;top:494px;width:23px;height:20px"><svg class="a" style="left:7px;top:3px" width="11" height="13"><path d="M1 1.5L10 6.5L1 11.5z" fill="#1040c0"/></svg></div>
<div class="btn" style="left:385px;top:494px;width:23px;height:20px"><svg class="a" style="left:6px;top:3px" width="11" height="13"><rect x="1" y="1.5" width="3" height="10" fill="#8a8a8a"/><rect x="6" y="1.5" width="3" height="10" fill="#8a8a8a"/></svg></div>
<div class="btn" style="left:412px;top:494px;width:23px;height:20px"><svg class="a" style="left:5px;top:3px" width="13" height="13"><path d="M1 1.5L6.5 6.5L1 11.5zM6.5 1.5L12 6.5L6.5 11.5z" fill="#1040c0"/></svg></div>
<div class="btn" style="left:439px;top:445px;width:56px;height:20px;"><svg class="a" style="left:5px;top:4px" width="12" height="12"><path d="M1.5 1.5L10.5 10.5M10.5 1.5L1.5 10.5" stroke="#d81010" stroke-width="2.4"/></svg><div class="a" style="left:20px;top:2.0px;line-height:14px"><span style="display:inline-block;transform:scaleX(0.8);transform-origin:0 0">Quit</span></div></div>
<div class="btn" style="left:439px;top:470px;width:56px;height:20px;"><svg class="a" style="left:4px;top:3px" width="13" height="13"><circle cx="6.5" cy="6.5" r="5.5" fill="#e04020" stroke="#902010"/><circle cx="6.5" cy="6.5" r="2.5" fill="none" stroke="#fff" stroke-width="1.2"/></svg><div class="a" style="left:19px;top:2.0px;line-height:14px"><span style="display:inline-block;transform:scaleX(0.8);transform-origin:0 0">Setup...</span></div></div>
<div class="btn btnh" style="left:439px;top:494px;width:56px;height:20px;"><svg class="a" style="left:4px;top:3px" width="13" height="13"><circle cx="6.5" cy="6.5" r="5.3" fill="#fff" stroke="#1040a0" stroke-width="1.3"/><path d="M6.5 5v5M6.5 3v1" stroke="#1040a0" stroke-width="1.4"/></svg><div class="a" style="left:19px;top:2.0px;line-height:14px"><span style="display:inline-block;transform:scaleX(0.8);transform-origin:0 0">About...</span></div></div>
<div class="a" style="left:447px;top:526px;width:171px;height:12px;background:linear-gradient(#fff,#e4e5f0);border:1px solid #767676;border-radius:2px;font-size:11px;color:#575757;padding-left:4px;line-height:12px;white-space:nowrap"><span style="display:inline-block;transform:scaleX(0.83);transform-origin:0 0">Show information about this application</span></div>
</body></html>
